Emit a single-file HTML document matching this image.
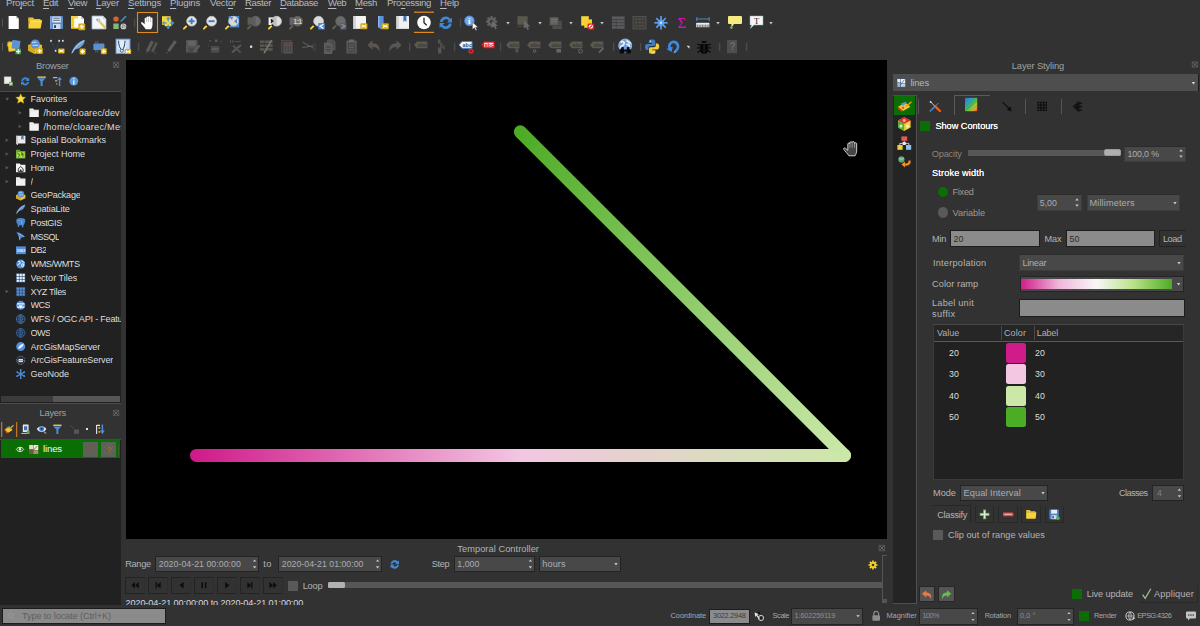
<!DOCTYPE html>
<html><head><meta charset="utf-8"><title>QGIS</title>
<style>
html,body{margin:0;padding:0;background:#323232;}
body{width:1200px;height:626px;overflow:hidden;position:relative;font-family:"Liberation Sans","DejaVu Sans",sans-serif;font-size:9px;color:#b4b4b4;}
div{position:absolute;box-sizing:border-box;}
.t{position:absolute;white-space:nowrap;line-height:12px;height:12px;}
.u{text-decoration:underline;text-underline-offset:1.6px;text-decoration-thickness:0.8px;}
svg.ov{position:absolute;left:0;top:0;width:1200px;height:626px;pointer-events:none;}
</style></head><body>
<span class="t" style="left:6px;top:-3.1px;color:#b6bac2;font-size:9.6px;letter-spacing:-0.27px;">Pro<span class="u">j</span>ect</span>
<span class="t" style="left:43px;top:-3.1px;color:#b6bac2;font-size:9.6px;letter-spacing:-0.39px;"><span class="u">E</span>dit</span>
<span class="t" style="left:68px;top:-3.1px;color:#b6bac2;font-size:9.6px;letter-spacing:-0.41px;"><span class="u">V</span>iew</span>
<span class="t" style="left:96px;top:-3.1px;color:#b6bac2;font-size:9.6px;letter-spacing:-0.20px;"><span class="u">L</span>ayer</span>
<span class="t" style="left:128px;top:-3.1px;color:#b6bac2;font-size:9.6px;letter-spacing:-0.21px;"><span class="u">S</span>ettings</span>
<span class="t" style="left:170px;top:-3.1px;color:#b6bac2;font-size:9.6px;letter-spacing:-0.21px;"><span class="u">P</span>lugins</span>
<span class="t" style="left:210px;top:-3.1px;color:#b6bac2;font-size:9.6px;letter-spacing:-0.20px;">Vect<span class="u">o</span>r</span>
<span class="t" style="left:245px;top:-3.1px;color:#b6bac2;font-size:9.6px;letter-spacing:-0.38px;"><span class="u">R</span>aster</span>
<span class="t" style="left:280px;top:-3.1px;color:#b6bac2;font-size:9.6px;letter-spacing:-0.38px;"><span class="u">D</span>atabase</span>
<span class="t" style="left:328px;top:-3.1px;color:#b6bac2;font-size:9.6px;letter-spacing:-0.52px;"><span class="u">W</span>eb</span>
<span class="t" style="left:355px;top:-3.1px;color:#b6bac2;font-size:9.6px;letter-spacing:-0.37px;"><span class="u">M</span>esh</span>
<span class="t" style="left:387px;top:-3.1px;color:#b6bac2;font-size:9.6px;letter-spacing:-0.35px;">Pro<span class="u">c</span>essing</span>
<span class="t" style="left:440px;top:-3.1px;color:#b6bac2;font-size:9.6px;letter-spacing:-0.18px;"><span class="u">H</span>elp</span>
<div style="left:125.9px;top:59.6px;width:761px;height:479.2px;background:#000;"></div>
<span class="t" style="left:36px;top:59.8px;color:#9fa3a9;font-size:9.3px;letter-spacing:-0.19px;">Browser</span>
<div style="left:0px;top:91px;width:121px;height:1px;background:#4a4a4a;"></div>
<div style="left:0px;top:92px;width:121px;height:311.3px;background:#212121;"></div>
<span class="t" style="left:30.5px;top:93.0px;color:#dedede;font-size:9.1px;max-width:90.5px;overflow:hidden;letter-spacing:-0.08px;">Favorites</span>
<span class="t" style="left:43.4px;top:106.8px;color:#dedede;font-size:9.1px;max-width:77.6px;overflow:hidden;letter-spacing:0.12px;">/home/cloarec/dev</span>
<span class="t" style="left:43.4px;top:120.5px;color:#dedede;font-size:9.1px;max-width:77.6px;overflow:hidden;letter-spacing:0.29px;">/home/cloarec/Mes</span>
<span class="t" style="left:30.5px;top:134.2px;color:#dedede;font-size:9.1px;max-width:90.5px;overflow:hidden;letter-spacing:-0.01px;">Spatial Bookmarks</span>
<span class="t" style="left:30.5px;top:148.0px;color:#dedede;font-size:9.1px;max-width:90.5px;overflow:hidden;letter-spacing:-0.05px;">Project Home</span>
<span class="t" style="left:30.5px;top:161.8px;color:#dedede;font-size:9.1px;max-width:90.5px;overflow:hidden;letter-spacing:-0.19px;">Home</span>
<span class="t" style="left:30.5px;top:175.5px;color:#dedede;font-size:9.1px;max-width:90.5px;overflow:hidden;letter-spacing:0.17px;">/</span>
<span class="t" style="left:30.5px;top:189.2px;color:#dedede;font-size:9.1px;max-width:90.5px;overflow:hidden;letter-spacing:-0.26px;">GeoPackage</span>
<span class="t" style="left:30.5px;top:203.0px;color:#dedede;font-size:9.1px;max-width:90.5px;overflow:hidden;letter-spacing:-0.12px;">SpatiaLite</span>
<span class="t" style="left:30.5px;top:216.8px;color:#dedede;font-size:9.1px;max-width:90.5px;overflow:hidden;letter-spacing:-0.34px;">PostGIS</span>
<span class="t" style="left:30.5px;top:230.5px;color:#dedede;font-size:9.1px;max-width:90.5px;overflow:hidden;letter-spacing:-0.60px;">MSSQL</span>
<span class="t" style="left:30.5px;top:244.2px;color:#dedede;font-size:9.1px;max-width:90.5px;overflow:hidden;letter-spacing:-0.57px;">DB2</span>
<span class="t" style="left:30.5px;top:258.0px;color:#dedede;font-size:9.1px;max-width:90.5px;overflow:hidden;letter-spacing:-0.43px;">WMS/WMTS</span>
<span class="t" style="left:30.5px;top:271.8px;color:#dedede;font-size:9.1px;max-width:90.5px;overflow:hidden;letter-spacing:-0.02px;">Vector Tiles</span>
<span class="t" style="left:30.5px;top:285.5px;color:#dedede;font-size:9.1px;max-width:90.5px;overflow:hidden;letter-spacing:-0.38px;">XYZ Tiles</span>
<span class="t" style="left:30.5px;top:299.2px;color:#dedede;font-size:9.1px;max-width:90.5px;overflow:hidden;letter-spacing:-0.60px;">WCS</span>
<span class="t" style="left:30.5px;top:313.0px;color:#dedede;font-size:9.1px;max-width:90.5px;overflow:hidden;letter-spacing:-0.22px;">WFS / OGC API - Features</span>
<span class="t" style="left:30.5px;top:326.8px;color:#dedede;font-size:9.1px;max-width:90.5px;overflow:hidden;letter-spacing:-0.60px;">OWS</span>
<span class="t" style="left:30.5px;top:340.5px;color:#dedede;font-size:9.1px;max-width:90.5px;overflow:hidden;letter-spacing:-0.14px;">ArcGisMapServer</span>
<span class="t" style="left:30.5px;top:354.2px;color:#dedede;font-size:9.1px;max-width:90.5px;overflow:hidden;letter-spacing:-0.14px;">ArcGisFeatureServer</span>
<span class="t" style="left:30.5px;top:368.0px;color:#dedede;font-size:9.1px;max-width:90.5px;overflow:hidden;letter-spacing:-0.06px;">GeoNode</span>
<div style="left:1px;top:396px;width:119px;height:6.2px;background:#565656;"></div>
<div style="left:1px;top:396px;width:52px;height:6.2px;background:#3b3b3b;"></div>
<span class="t" style="left:39.5px;top:407.4px;color:#9fa3a9;font-size:9.3px;letter-spacing:-0.23px;">Layers</span>
<div style="left:0px;top:440px;width:120.6px;height:164.7px;background:#212121;"></div>
<div style="left:1.2px;top:440.2px;width:118.6px;height:17.8px;background:#0b6e05;"></div>
<span class="t" style="left:43px;top:443.0px;color:#f4f6fa;font-size:9.6px;letter-spacing:-0.15px;">lines</span>
<div style="left:83px;top:442px;width:15px;height:14.5px;background:#5c615a;"></div>
<div style="left:101px;top:442px;width:15px;height:14.5px;background:#5c615a;"></div>
<div style="left:118px;top:444px;width:1px;height:11px;background:#3d5c3a;"></div>
<span class="t" style="left:457.3px;top:543.0px;color:#aeb2b8;font-size:9.3px;letter-spacing:0.03px;">Temporal Controller</span>
<span class="t" style="left:125.3px;top:558.0px;color:#b4b4b4;font-size:9.2px;letter-spacing:-0.34px;">Range</span>
<div style="left:155.3px;top:555.6px;width:104px;height:16.6px;background:#484848;border:1px solid #242424;"></div>
<span class="t" style="left:158.8px;top:557.9px;color:#a9adb5;font-size:8.8px;letter-spacing:0.02px;">2020-04-21 00:00:00</span>
<span class="t" style="left:263.3px;top:558.0px;color:#b4b4b4;font-size:9.2px;letter-spacing:0.36px;">to</span>
<div style="left:278.3px;top:555.6px;width:103.8px;height:16.6px;background:#484848;border:1px solid #242424;"></div>
<span class="t" style="left:281.8px;top:557.9px;color:#a9adb5;font-size:8.8px;letter-spacing:-0.00px;">2020-04-21 01:00:00</span>
<span class="t" style="left:431.7px;top:558.0px;color:#b4b4b4;font-size:9.2px;letter-spacing:-0.33px;">Step</span>
<div style="left:454.3px;top:555.6px;width:81px;height:16.6px;background:#484848;border:1px solid #242424;"></div>
<span class="t" style="left:457.3px;top:557.9px;color:#a9adb5;font-size:8.8px;letter-spacing:-0.00px;">1,000</span>
<div style="left:539.3px;top:555.6px;width:81.5px;height:16.6px;background:#484848;border:1px solid #242424;"></div>
<span class="t" style="left:542.3px;top:557.9px;color:#a9adb5;font-size:9.2px;letter-spacing:0.08px;">hours</span>
<div style="left:125.4px;top:577px;width:19.6px;height:16.5px;border:1px solid #232323;border-right-color:#2e2e2e;"></div>
<div style="left:148.4px;top:577px;width:19.6px;height:16.5px;border:1px solid #232323;border-right-color:#2e2e2e;"></div>
<div style="left:171.4px;top:577px;width:19.6px;height:16.5px;border:1px solid #232323;border-right-color:#2e2e2e;"></div>
<div style="left:194.4px;top:577px;width:19.6px;height:16.5px;border:1px solid #232323;border-right-color:#2e2e2e;"></div>
<div style="left:217.4px;top:577px;width:19.6px;height:16.5px;border:1px solid #232323;border-right-color:#2e2e2e;"></div>
<div style="left:240.4px;top:577px;width:19.6px;height:16.5px;border:1px solid #232323;border-right-color:#2e2e2e;"></div>
<div style="left:263.4px;top:577px;width:19.6px;height:16.5px;border:1px solid #232323;border-right-color:#2e2e2e;"></div>
<div style="left:288px;top:580.5px;width:10px;height:10px;background:#595959;"></div>
<span class="t" style="left:302.7px;top:579.5px;color:#b4b4b4;font-size:9.2px;letter-spacing:-0.21px;">Loop</span>
<div style="left:328px;top:582px;width:554px;height:6px;background:#575757;"></div>
<div style="left:328px;top:582px;width:17px;height:6px;background:#b2b2b2;border-radius:1.5px;"></div>
<div style="left:125px;top:597px;width:300px;height:8px;overflow:hidden;">
<span class="t" style="left:0.5px;top:0.4px;color:#d6dae0;font-size:9.1px;letter-spacing:-0.09px;">2020-04-21 00:00:00 to 2020-04-21 01:00:00</span>
</div>
<div style="left:882px;top:555px;width:5px;height:48px;border-left:1px solid #555;border-top:1px solid #555;"></div>
<div style="left:882px;top:599px;width:5px;height:4px;background:#555;"></div>
<div style="left:2.3px;top:607.5px;width:163.3px;height:16.5px;background:#8b8b8b;border:1px solid #1d1d1d;"></div>
<span class="t" style="left:22px;top:610.0px;color:#5e5e5e;font-size:9.1px;letter-spacing:-0.08px;">Type to locate (Ctrl+K)</span>
<span class="t" style="left:670.6px;top:610.0px;color:#a4a8b0;font-size:7.4px;letter-spacing:-0.08px;">Coordinate</span>
<div style="left:708.6px;top:608.6px;width:41.8px;height:15px;background:#8b8b8b;border:1px solid #1d1d1d;"></div>
<span class="t" style="left:713.1px;top:610.1px;color:#3c3c3c;font-size:7.3px;letter-spacing:-0.22px;">3022.2948</span>
<span class="t" style="left:772.6px;top:610.0px;color:#a4a8b0;font-size:7.4px;letter-spacing:-0.42px;">Scale</span>
<div style="left:791.4px;top:607.8px;width:71.5px;height:16.8px;background:#484848;border:1px solid #242424;"></div>
<span class="t" style="left:794.6px;top:610.2px;color:#8f8f8f;font-size:7.3px;letter-spacing:-0.13px;">1:602259119</span>
<span class="t" style="left:886.4px;top:610.0px;color:#a4a8b0;font-size:7.4px;letter-spacing:-0.00px;">Magnifier</span>
<div style="left:918.5px;top:607.5px;width:59.8px;height:17.6px;background:#484848;border:1px solid #242424;"></div>
<span class="t" style="left:922.5px;top:610.3px;color:#8f8f8f;font-size:7.3px;letter-spacing:-0.54px;">100%</span>
<span class="t" style="left:984.7px;top:610.0px;color:#a4a8b0;font-size:7.4px;letter-spacing:-0.15px;">Rotation</span>
<div style="left:1017px;top:607.5px;width:57.4px;height:17.6px;background:#484848;border:1px solid #242424;"></div>
<span class="t" style="left:1020px;top:610.3px;color:#8f8f8f;font-size:7.3px;letter-spacing:0.06px;">0,0 °</span>
<div style="left:1079px;top:610.7px;width:10px;height:10.4px;background:#0b6e05;"></div>
<span class="t" style="left:1094px;top:610.0px;color:#a4a8b0;font-size:7.4px;letter-spacing:-0.29px;">Render</span>
<span class="t" style="left:1137.2px;top:610.0px;color:#a4a8b0;font-size:7.4px;letter-spacing:-0.54px;">EPSG:4326</span>
<span class="t" style="left:1011.8px;top:60.0px;color:#9fa3a9;font-size:9.3px;letter-spacing:-0.12px;">Layer Styling</span>
<div style="left:893px;top:74px;width:305.6px;height:17px;background:#4e4e4e;border-right:1px solid #1e1e1e;"></div>
<span class="t" style="left:910.4px;top:76.5px;color:#b4b8be;font-size:9.4px;letter-spacing:-0.14px;">lines</span>
<div style="left:893px;top:94.6px;width:24px;height:509.4px;background:#242424;border-top:1px solid #4e4e4e;border-right:1px solid #505050;border-bottom:1px solid #505050;"></div>
<div style="left:894px;top:96px;width:21.4px;height:19px;background:#0b6e05;"></div>
<div style="left:918.2px;top:99px;width:1px;height:15px;background:#555;"></div>
<div style="left:1025px;top:99px;width:1px;height:14.5px;background:#555;"></div>
<div style="left:1061px;top:99px;width:1px;height:14.5px;background:#555;"></div>
<div style="left:954px;top:95px;width:36px;height:20px;border-top:1px solid #5a5a5a;border-left:1px solid #5a5a5a;"></div>
<div style="left:920px;top:121px;width:10px;height:10px;background:#0b6e05;"></div>
<span class="t" style="left:935.4px;top:120.0px;color:#ffffff;font-size:9.2px;text-shadow:0 0 0.5px #fff;letter-spacing:-0.02px;">Show Contours</span>
<span class="t" style="left:931.8px;top:147.5px;color:#8c867c;font-size:9.2px;letter-spacing:-0.18px;">Opacity</span>
<div style="left:967.5px;top:150px;width:153px;height:6px;background:#575757;"></div>
<div style="left:1103.8px;top:149.3px;width:17.4px;height:7px;background:#b0b0b0;border-radius:2px;border:1px solid #9a9a9a;"></div>
<div style="left:1124.2px;top:145.8px;width:62px;height:16.2px;background:#484848;border:1px solid #3c3c3c;border-top-color:#2b2b2b;"></div>
<span class="t" style="left:1127.6px;top:147.9px;color:#a9adb5;font-size:8.8px;letter-spacing:-0.15px;">100,0 %</span>
<span class="t" style="left:932px;top:166.5px;color:#ffffff;font-size:9.2px;text-shadow:0 0 0.5px #fff;letter-spacing:0.14px;">Stroke width</span>
<div style="left:937.6px;top:186.8px;width:10.4px;height:10.4px;background:#0b6e05;border-radius:50%;"></div>
<span class="t" style="left:952.5px;top:186.0px;color:#a09a92;font-size:9.2px;letter-spacing:-0.27px;">Fixed</span>
<div style="left:937.6px;top:207.3px;width:10.4px;height:10.4px;background:#595959;border-radius:50%;"></div>
<span class="t" style="left:952.5px;top:206.5px;color:#a09a92;font-size:9.2px;letter-spacing:-0.07px;">Variable</span>
<div style="left:1036.8px;top:194.4px;width:45.2px;height:16.4px;background:#484848;border:1px solid #3c3c3c;border-top-color:#2b2b2b;"></div>
<span class="t" style="left:1039.8px;top:196.6px;color:#a9adb5;font-size:8.8px;letter-spacing:-0.03px;">5,00</span>
<div style="left:1086.5px;top:194.4px;width:93px;height:16.4px;background:#484848;border:1px solid #3c3c3c;border-top-color:#2b2b2b;"></div>
<span class="t" style="left:1089.5px;top:196.6px;color:#a9adb5;font-size:9.2px;letter-spacing:0.12px;">Millimeters</span>
<span class="t" style="left:932px;top:232.5px;color:#b4b4b4;font-size:9.2px;letter-spacing:-0.27px;">Min</span>
<div style="left:950.2px;top:230.4px;width:90px;height:16.6px;background:#8b8b8b;border:1px solid #1d1d1d;"></div>
<span class="t" style="left:953.6px;top:232.7px;color:#2e2e2e;font-size:8.8px;letter-spacing:0.05px;">20</span>
<span class="t" style="left:1044.6px;top:232.5px;color:#b4b4b4;font-size:9.2px;letter-spacing:-0.22px;">Max</span>
<div style="left:1066px;top:230.4px;width:89.4px;height:16.6px;background:#8b8b8b;border:1px solid #1d1d1d;"></div>
<span class="t" style="left:1069.4px;top:232.7px;color:#2e2e2e;font-size:8.8px;letter-spacing:0.25px;">50</span>
<div style="left:1159px;top:230.4px;width:27px;height:16.6px;border:1px solid #222;border-right:none;"></div>
<span class="t" style="left:1162.9px;top:232.5px;color:#b4b4b4;font-size:9.2px;letter-spacing:-0.44px;">Load</span>
<span class="t" style="left:933px;top:256.5px;color:#b4b4b4;font-size:9.2px;letter-spacing:0.22px;">Interpolation</span>
<div style="left:1019.4px;top:254px;width:164.6px;height:17px;background:#484848;border:1px solid #3c3c3c;border-top-color:#2b2b2b;"></div>
<span class="t" style="left:1022.4px;top:256.5px;color:#a9adb5;font-size:9.2px;letter-spacing:-0.26px;">Linear</span>
<span class="t" style="left:932px;top:277.5px;color:#b4b4b4;font-size:9.2px;letter-spacing:0.08px;">Color ramp</span>
<div style="left:1019.6px;top:275.6px;width:164.4px;height:16.2px;background:#484848;border:1px solid #242424;"></div>
<div style="left:1020.8px;top:279px;width:151.5px;height:10px;background:linear-gradient(90deg,#d01c8b 0%,#f1b6da 25%,#f7f7f7 50%,#b8e186 75%,#4dac26 100%);"></div>
<span class="t" style="left:932px;top:296.8px;color:#b4b4b4;font-size:9.2px;letter-spacing:0.21px;">Label unit</span>
<span class="t" style="left:932px;top:308.2px;color:#b4b4b4;font-size:9.2px;letter-spacing:0.35px;">suffix</span>
<div style="left:1018.8px;top:298.8px;width:166.2px;height:18px;background:#8b8b8b;border:1px solid #1d1d1d;"></div>
<div style="left:933px;top:324px;width:251px;height:156px;background:#212121;border:1px solid #3a3a3a;border-top-color:#484848;"></div>
<div style="left:934px;top:325px;width:249px;height:16.5px;background:#262626;border-bottom:1px solid #585858;"></div>
<div style="left:1001px;top:326px;width:1px;height:14px;background:#4a4a4a;"></div>
<div style="left:1034px;top:326px;width:1px;height:14px;background:#4a4a4a;"></div>
<span class="t" style="left:937px;top:327.0px;color:#aeb0b6;font-size:9px;letter-spacing:-0.03px;">Value</span>
<span class="t" style="left:1004px;top:327.0px;color:#aeb0b6;font-size:9px;letter-spacing:0.10px;">Color</span>
<span class="t" style="left:1036.8px;top:327.0px;color:#aeb0b6;font-size:9px;letter-spacing:-0.17px;">Label</span>
<span class="t" style="left:949px;top:346.8px;color:#dedede;font-size:8.8px;letter-spacing:0.20px;">20</span>
<span class="t" style="left:1035px;top:346.8px;color:#dedede;font-size:8.8px;letter-spacing:0.00px;">20</span>
<div style="left:1006px;top:342.8px;width:20.4px;height:20px;background:#d01c8b;border-radius:2.5px;"></div>
<span class="t" style="left:949px;top:368.1px;color:#dedede;font-size:8.8px;letter-spacing:0.20px;">30</span>
<span class="t" style="left:1035px;top:368.1px;color:#dedede;font-size:8.8px;letter-spacing:0.00px;">30</span>
<div style="left:1006px;top:364.1px;width:20.4px;height:20px;background:#f3c6e2;border-radius:2.5px;"></div>
<span class="t" style="left:949px;top:389.5px;color:#dedede;font-size:8.8px;letter-spacing:0.20px;">40</span>
<span class="t" style="left:1035px;top:389.5px;color:#dedede;font-size:8.8px;letter-spacing:0.00px;">40</span>
<div style="left:1006px;top:385.5px;width:20.4px;height:20px;background:#cce8a9;border-radius:2.5px;"></div>
<span class="t" style="left:949px;top:410.8px;color:#dedede;font-size:8.8px;letter-spacing:0.20px;">50</span>
<span class="t" style="left:1035px;top:410.8px;color:#dedede;font-size:8.8px;letter-spacing:0.00px;">50</span>
<div style="left:1006px;top:406.8px;width:20.4px;height:20px;background:#4dac26;border-radius:2.5px;"></div>
<span class="t" style="left:933px;top:487.0px;color:#b4b4b4;font-size:9.2px;letter-spacing:0.00px;">Mode</span>
<div style="left:960.4px;top:484.6px;width:87.4px;height:16.8px;background:#484848;border:1px solid #242424;"></div>
<span class="t" style="left:963.6px;top:487.0px;color:#a9adb5;font-size:9.2px;letter-spacing:0.07px;">Equal Interval</span>
<span class="t" style="left:1119px;top:487.0px;color:#b4b4b4;font-size:9.2px;letter-spacing:-0.60px;">Classes</span>
<div style="left:1152px;top:484.6px;width:32px;height:16.8px;background:#484848;border:1px solid #242424;"></div>
<span class="t" style="left:1157px;top:487.0px;color:#808080;font-size:8.8px;">4</span>
<div style="left:933px;top:505.4px;width:37.6px;height:18px;border-top:1px solid #262626;border-right:1px solid #262626;"></div>
<span class="t" style="left:937.2px;top:508.5px;color:#b4b4b4;font-size:9.2px;letter-spacing:-0.27px;">Classify</span>
<div style="left:974.7px;top:505.6px;width:19.6px;height:17.6px;border:1px solid #282828;border-top-color:#303030;"></div>
<div style="left:998px;top:505.6px;width:19.6px;height:17.6px;border:1px solid #282828;border-top-color:#303030;"></div>
<div style="left:1021.2px;top:505.6px;width:19.6px;height:17.6px;border:1px solid #282828;border-top-color:#303030;"></div>
<div style="left:1044.6px;top:505.6px;width:19.6px;height:17.6px;border:1px solid #282828;border-top-color:#303030;"></div>
<div style="left:933px;top:530px;width:10px;height:10px;background:#595959;"></div>
<span class="t" style="left:948px;top:529.0px;color:#b4b4b4;font-size:9.2px;letter-spacing:0.01px;">Clip out of range values</span>
<div style="left:918.6px;top:586.4px;width:16px;height:16px;background:#555555;border:1px solid #262626;"></div>
<div style="left:938.4px;top:586.4px;width:16.2px;height:16px;background:#555555;border:1px solid #262626;"></div>
<div style="left:1072px;top:589px;width:10px;height:10px;background:#0b6e05;"></div>
<span class="t" style="left:1086.7px;top:588.0px;color:#b4b4b4;font-size:9.2px;letter-spacing:-0.11px;">Live update</span>
<div style="left:1139px;top:585px;width:58.6px;height:18.4px;border-right:1px solid #292929;border-bottom:1px solid #292929;"></div>
<span class="t" style="left:1154px;top:588.0px;color:#b4b4b4;font-size:9.2px;letter-spacing:0.13px;">Appliquer</span>
<div style="left:0px;top:439px;width:121px;height:1px;background:#484848;"></div>
<div style="left:0px;top:403.3px;width:121px;height:1px;background:#4a4a4a;"></div>
<svg class="ov" viewBox="0 0 1200 626">
<rect x="2" y="19" width="1" height="7.5" fill="#555"/>
<g transform="translate(8.6 16)"><path d="M0 0H7.4L10.2 2.8V13H0Z" fill="#fdfdfd" /><path d="M7.4 0V2.8H10.2Z" fill="#c9c9c9" /></g>
<g transform="translate(28 17)"><path d="M0.3 0.5H5L6.2 2H12.5V4H0.3Z" fill="#e6bf3a" /><path d="M1.6 3.2H14.2L12.6 11.5H0.3Z" fill="#f7d53a" /><path d="M0.3 2.5V11.5L1.8 3.4Z" fill="#d9b02e" /><line x1="2" y1="4.3" x2="13" y2="4.3" stroke="#fbe88a" stroke-width="0.7" /></g>
<g transform="translate(50 16)"><rect x="0" y="0" width="13" height="13" fill="#5b8cc8" rx="0.8" /><rect x="2.3" y="0.6" width="8.4" height="5.8" fill="#e9edf2" /><line x1="3.2" y1="2.2" x2="9.8" y2="2.2" stroke="#44505e" stroke-width="0.9" /><line x1="3.2" y1="4.3" x2="9.8" y2="4.3" stroke="#44505e" stroke-width="0.9" /><rect x="3" y="8" width="7.4" height="5" fill="#d4dbe6" /><rect x="4" y="9.2" width="2" height="2.8" fill="#2a4b7c" /><rect x="0" y="0" width="1.3" height="13" fill="#7aa6da" /></g>
<g transform="translate(71 16)"><path d="M0 0H10L13 3V13H0Z" fill="#fbfbfb" /><path d="M10 0V3H13Z" fill="#c9c9c9" /><rect x="0" y="0" width="3.2" height="13" fill="#f7d53a" /><rect x="0" y="0" width="7" height="2.4" fill="#f7d53a" /><line x1="0.5" y1="3" x2="2.5" y2="3" stroke="#d2a70f" stroke-width="0.7" /><line x1="0.5" y1="6" x2="2.5" y2="6" stroke="#d2a70f" stroke-width="0.7" /><line x1="0.5" y1="9" x2="2.5" y2="9" stroke="#d2a70f" stroke-width="0.7" /><rect x="0" y="11.7" width="13" height="1.3" fill="#d2a70f" /><rect x="7.4" y="7.4" width="6.8" height="6.8" fill="#d2a70f" rx="1" /><line x1="8.600000000000001" y1="10.8" x2="13.0" y2="10.8" stroke="#fff" stroke-width="1.1" /><line x1="10.8" y1="8.600000000000001" x2="10.8" y2="13.0" stroke="#fff" stroke-width="1.1" /><line x1="9.200000000000001" y1="9.200000000000001" x2="12.4" y2="12.4" stroke="#fff6d0" stroke-width="0.8" /><line x1="9.200000000000001" y1="12.4" x2="12.4" y2="9.200000000000001" stroke="#fff6d0" stroke-width="0.8" /></g>
<g transform="translate(92 16)"><path d="M0 0H11L14 3V13H0Z" fill="#f4f6f8" stroke="#9fb4cc" stroke-width="0.8" /><path d="M11 0V3H14Z" fill="#c9c9c9" /><line x1="6.5" y1="4.5" x2="13" y2="11.5" stroke="#e3c64a" stroke-width="2.2" stroke-linecap="round"/><line x1="6" y1="4" x2="8.5" y2="6.5" stroke="#cfcfcf" stroke-width="1.6" /><circle cx="5.4" cy="3.6" r="1.0" fill="#aaa" /><line x1="4" y1="3" x2="6" y2="5.5" stroke="#888" stroke-width="0.6" /><line x1="7" y1="2.5" x2="8" y2="4.5" stroke="#999" stroke-width="0.6" /></g>
<g transform="translate(113 16)"><path d="M3 0.3L5.6 1.6V4.6L3 6L0.4 4.6V1.6Z" fill="#d9622b" /><rect x="0.3" y="7.5" width="5.4" height="5.6" fill="#82b77c" rx="0.4" /><line x1="8" y1="5.2" x2="12.6" y2="0.6" stroke="#4f86c6" stroke-width="1.6" stroke-linecap="round"/><line x1="7.3" y1="6.1" x2="8.4" y2="5" stroke="#2f5f9a" stroke-width="1.4" /><circle cx="10.4" cy="10.4" r="2.9" fill="#cfcfcf" /><path d="M9 9.2A2 2 0 0 1 12 11.5" fill="none" stroke="#6c6c6c" stroke-width="0.9" /><circle cx="9.6" cy="11.2" r="0.9" fill="#777" /></g>
<rect x="134" y="19" width="1.3" height="8" fill="#4c4c4c"/>
<rect x="137.5" y="12.5" width="20" height="20" fill="none" stroke="#e08a1e" stroke-width="1.1"/>
<g transform="translate(140.6 15.8) scale(1.2 1.02)"><path d="M4.2 13.2C3.2 11.2 1.2 9 0.4 7.4C0 6.4 1 5.8 1.8 6.6L3.4 8.4V2.6C3.4 1.6 4.8 1.6 4.9 2.6V1.4C5 0.4 6.5 0.4 6.6 1.4V1.2C6.7 0.3 8.2 0.3 8.3 1.3V2.2C8.4 1.4 9.8 1.4 9.9 2.4V8.6C9.9 10.6 9.3 11.8 8.7 13.2Z" fill="#fdfdfd" /><line x1="5.0" y1="2.6" x2="5.0" y2="6" stroke="#999" stroke-width="0.5" /><line x1="6.6" y1="1.8" x2="6.6" y2="6" stroke="#999" stroke-width="0.5" /><line x1="8.3" y1="2.2" x2="8.3" y2="6" stroke="#999" stroke-width="0.5" /></g>
<g transform="translate(161 16)"><rect x="1" y="0.2" width="8.6" height="8.6" fill="#f7d53a" /><rect x="3.6" y="3.4" width="6.8" height="6.8" fill="#f3df3f" /><line x1="8.7" y1="7.0" x2="12.2" y2="7" stroke="#4f8fd6" stroke-width="1.2" /><path d="M13.399999999999999 7.0L11.0 9.2L11.0 4.8Z" fill="#4f8fd6" /><line x1="5.7" y1="7.0" x2="2.2" y2="7" stroke="#4f8fd6" stroke-width="1.2" /><path d="M1.0000000000000002 7.0L3.4000000000000004 4.8L3.4000000000000004 9.2Z" fill="#4f8fd6" /><line x1="7.2" y1="8.5" x2="7.2" y2="12" stroke="#4f8fd6" stroke-width="1.2" /><path d="M7.2 13.2L5.0 10.8L9.4 10.8Z" fill="#4f8fd6" /><line x1="7.2" y1="5.5" x2="7.2" y2="2" stroke="#4f8fd6" stroke-width="1.2" /><path d="M7.2 0.8L9.4 3.2L5.0 3.2Z" fill="#4f8fd6" /></g>
<g transform="translate(183 16)"><line x1="3.6" y1="10.0" x2="0.9" y2="12.7" stroke="#f7d53a" stroke-width="1.8" stroke-linecap="round"/><line x1="5.2" y1="8.4" x2="3.8" y2="9.8" stroke="#151515" stroke-width="2" /><circle cx="8.6" cy="5.2" r="4.9" fill="#e4e4e4" stroke="#bdbdbd" stroke-width="0.8" /><g transform="translate(-0.6 -0.4)"><line x1="6.2" y1="5.6" x2="12.2" y2="5.6" stroke="#3f78bd" stroke-width="1.9" /><line x1="9.2" y1="2.6" x2="9.2" y2="8.6" stroke="#3f78bd" stroke-width="1.9" /></g></g>
<g transform="translate(203 16)"><line x1="3.6" y1="10.0" x2="0.9" y2="12.7" stroke="#f7d53a" stroke-width="1.8" stroke-linecap="round"/><line x1="5.2" y1="8.4" x2="3.8" y2="9.8" stroke="#151515" stroke-width="2" /><circle cx="8.6" cy="5.2" r="4.9" fill="#e4e4e4" stroke="#bdbdbd" stroke-width="0.8" /><g transform="translate(-0.6 -0.4)"><line x1="6.2" y1="5.6" x2="12.2" y2="5.6" stroke="#3f78bd" stroke-width="1.9" /></g></g>
<g transform="translate(225 16)"><rect x="3.6" y="0" width="10.6" height="11.4" fill="#4b86cc" /><line x1="3.6" y1="10.0" x2="0.9" y2="12.7" stroke="#f7d53a" stroke-width="1.8" stroke-linecap="round"/><line x1="5.2" y1="8.4" x2="3.8" y2="9.8" stroke="#151515" stroke-width="2" /><circle cx="8.6" cy="5.2" r="4.9" fill="#d8d8d8" stroke="#bdbdbd" stroke-width="0.8" /><g transform="translate(-0.6 -0.4)"><path d="M12.6 3.2L9.6 5.6L12.6 8Z" fill="#4b86cc" /><path d="M5.4 1.6L7.6 4.4L8.6 1.4Z" fill="#4b86cc" /></g></g>
<g transform="translate(247 16)"><rect x="0.6" y="1.4" width="4.2" height="7.4" fill="#5e5b52" /><line x1="3.6" y1="10.0" x2="0.9" y2="12.7" stroke="#66614a" stroke-width="1.8" stroke-linecap="round"/><line x1="5.2" y1="8.4" x2="3.8" y2="9.8" stroke="#444" stroke-width="2" /><circle cx="8.6" cy="5.2" r="4.9" fill="#6b6b6b" stroke="#5e5e5c" stroke-width="0.8" /><g transform="translate(-0.6 -0.4)"><path d="M9.2 0.8A4.8 4.8 0 0 0 9.2 10.4Z" fill="#5c5c5c" /></g></g>
<g transform="translate(268 16)"><rect x="0.6" y="1.4" width="4.4" height="7.6" fill="#f4f4f4" /><line x1="3.6" y1="10.0" x2="0.9" y2="12.7" stroke="#f7d53a" stroke-width="1.8" stroke-linecap="round"/><line x1="5.2" y1="8.4" x2="3.8" y2="9.8" stroke="#151515" stroke-width="2" /><circle cx="8.6" cy="5.2" r="4.9" fill="#dedede" stroke="#bdbdbd" stroke-width="0.8" /><g transform="translate(-0.6 -0.4)"><path d="M9.2 0.8A4.8 4.8 0 0 0 9.2 10.4Z" fill="#bdbdbd" /><path d="M3.4 2.6L6.4 5.4L3.4 8.2Z" fill="#222" /></g></g>
<g transform="translate(289 16)"><rect x="0.6" y="1.4" width="4.4" height="7.6" fill="#666" /><line x1="3.6" y1="10.0" x2="0.9" y2="12.7" stroke="#66614a" stroke-width="1.8" stroke-linecap="round"/><line x1="5.2" y1="8.4" x2="3.8" y2="9.8" stroke="#444" stroke-width="2" /><circle cx="8.6" cy="5.2" r="4.9" fill="#6b6b6b" stroke="#5e5e5c" stroke-width="0.8" /><g transform="translate(-0.6 -0.4)"><text x="5.2" y="8.2" fill="#d0d0d0" font-size="6.6" font-family="Liberation Sans, sans-serif" font-weight="bold" letter-spacing="-0.6">1:1</text></g></g>
<g transform="translate(310 16)"><line x1="3.6" y1="10.0" x2="0.9" y2="12.7" stroke="#f7d53a" stroke-width="1.8" stroke-linecap="round"/><line x1="5.2" y1="8.4" x2="3.8" y2="9.8" stroke="#151515" stroke-width="2" /><circle cx="8.6" cy="5.2" r="4.9" fill="#dcdcdc" stroke="#bdbdbd" stroke-width="0.8" /><g transform="translate(-0.6 -0.4)"></g><rect x="8.2" y="7" width="6.6" height="6.6" fill="#4b8ad4" rx="0.6" /><path d="M13.4 8.2L10 10.3L13.4 12.4" fill="none" stroke="#fff" stroke-width="1.3" /></g>
<g transform="translate(332 16)"><line x1="3.6" y1="10.0" x2="0.9" y2="12.7" stroke="#66614a" stroke-width="1.8" stroke-linecap="round"/><line x1="5.2" y1="8.4" x2="3.8" y2="9.8" stroke="#444" stroke-width="2" /><circle cx="8.6" cy="5.2" r="4.9" fill="#6b6b6b" stroke="#5e5e5c" stroke-width="0.8" /><g transform="translate(-0.6 -0.4)"></g><rect x="8.2" y="7" width="6.2" height="6.4" fill="#5a6068" rx="0.6" /><path d="M9.6 8.2L13 10.2L9.6 12.2" fill="none" stroke="#8d959e" stroke-width="1.2" /></g>
<g transform="translate(353 16)"><rect x="0.4" y="0" width="12.6" height="13" fill="#f3f3f3" rx="0.6" /><rect x="0.4" y="0" width="2.6" height="13" fill="#d6d6d6" /><line x1="0.6" y1="12.4" x2="13" y2="12.4" stroke="#cfcfcf" stroke-width="0.8" /><rect x="7.4" y="7.2" width="7" height="6" fill="#d2a70f" rx="1" /><line x1="8.7" y1="8.799999999999999" x2="13.100000000000001" y2="11.6" stroke="#fff" stroke-width="0.9" /><line x1="8.7" y1="11.6" x2="13.100000000000001" y2="8.799999999999999" stroke="#fff" stroke-width="0.9" /><line x1="8.5" y1="10.2" x2="13.3" y2="10.2" stroke="#fff" stroke-width="0.9" /></g>
<g transform="translate(377 16)"><path d="M1 0H6.6V11L4.2 13.4L1 11Z" fill="#5b93d6" /><path d="M1 0H2.4V12L1 11Z" fill="#89b3e6" /><rect x="4.6" y="7.2" width="7.2" height="6" fill="#d2a70f" rx="1" /><line x1="5.999999999999999" y1="8.799999999999999" x2="10.399999999999999" y2="11.6" stroke="#fff" stroke-width="0.9" /><line x1="5.999999999999999" y1="11.6" x2="10.399999999999999" y2="8.799999999999999" stroke="#fff" stroke-width="0.9" /><line x1="5.799999999999999" y1="10.2" x2="10.6" y2="10.2" stroke="#fff" stroke-width="0.9" /></g>
<g transform="translate(396 16)"><rect x="0.4" y="0" width="12.6" height="13" fill="#f0f0f0" rx="0.6" /><rect x="0.4" y="0" width="2.6" height="13" fill="#d6d6d6" /><line x1="0.6" y1="12.4" x2="13" y2="12.4" stroke="#cfcfcf" stroke-width="0.8" /><path d="M7.4 0H10.4V6L8.9 4.6L7.4 6Z" fill="#3f74b8" /></g>
<rect x="414" y="11.6" width="20" height="1.2" fill="#e08a1e"/><rect x="414" y="31.8" width="20" height="1.2" fill="#e08a1e"/>
<g transform="translate(417 15.5)"><circle cx="7" cy="7" r="6.8" fill="#fdfdfd" /><path d="M7 2.6V7.2L9.4 9.4" fill="none" stroke="#222" stroke-width="1.3" stroke-linecap="round"/></g>
<g transform="translate(439 16)"><path d="M1 6A5.8 5.8 0 0 1 11.6 3L13 1.4V6.4H8L9.8 4.6A3.4 3.4 0 0 0 3.6 6Z" fill="#3f8ad8" /><path d="M12.6 7.4A5.8 5.8 0 0 1 2 10.4L0.6 12V7H5.6L3.8 8.8A3.4 3.4 0 0 0 10 7.4Z" fill="#3f8ad8" /></g>
<rect x="460" y="19" width="1.3" height="8" fill="#4c4c4c"/>
<g transform="translate(464 15.5)"><circle cx="5.4" cy="5.2" r="5.2" fill="#4d8fdc" /><circle cx="5.4" cy="5.2" r="4.2" fill="#74aaea" /><text x="3.9" y="8.4" fill="#fff" font-size="9" font-weight="bold" font-family="Liberation Serif, serif">i</text><path d="M8.4 6.6V14L10.4 12.2L11.8 15L13 14.4L11.6 11.8H14Z" fill="#fdfdfd" stroke="#333" stroke-width="0.4" /></g>
<g transform="translate(486 16)"><line x1="8.3" y1="5.6" x2="11.2" y2="5.6" stroke="#626260" stroke-width="2.2" /><line x1="7.51" y1="7.51" x2="9.56" y2="9.56" stroke="#626260" stroke-width="2.2" /><line x1="5.6" y1="8.3" x2="5.6" y2="11.2" stroke="#626260" stroke-width="2.2" /><line x1="3.69" y1="7.51" x2="1.64" y2="9.56" stroke="#626260" stroke-width="2.2" /><line x1="2.9" y1="5.6" x2="0.0" y2="5.6" stroke="#626260" stroke-width="2.2" /><line x1="3.69" y1="3.69" x2="1.64" y2="1.64" stroke="#626260" stroke-width="2.2" /><line x1="5.6" y1="2.9" x2="5.6" y2="0.0" stroke="#626260" stroke-width="2.2" /><line x1="7.51" y1="3.69" x2="9.56" y2="1.64" stroke="#626260" stroke-width="2.2" /><circle cx="5.6" cy="5.6" r="4.2" fill="#626260" /><circle cx="5.6" cy="5.6" r="1.8900000000000001" fill="#3a3a3a" /><path d="M6.2 5V11.8L8 10.4L9.4 13.4L10.8 12.8L9.4 10H12Z" fill="#6e6e6c" /></g>
<path d="M506.3 22H509.7L508 24.5Z" fill="#c8c8c8"/>
<g transform="translate(517 16)"><rect x="0.4" y="0.2" width="10.2" height="8.6" fill="#5a574e" /><path d="M1 10.4H11" fill="none" stroke="#5a574e" stroke-width="1" stroke-dasharray="1.4 1"/><path d="M7 4.6V12.6L9 11L10.4 14L12 13.3L10.6 10.4H13.4Z" fill="#6a6a6a" /></g>
<path d="M538.3 22H541.7L540 24.5Z" fill="#c8c8c8"/>
<g transform="translate(549 17)"><rect x="3.4" y="3.6" width="9.4" height="8.4" fill="#4d4d4a" /><rect x="0.6" y="0" width="9.2" height="8.4" fill="#5d5d5a" stroke="#3a3a3a" stroke-width="0.5" /><line x1="2" y1="2.4" x2="8.4" y2="2.4" stroke="#7c7a70" stroke-width="0.9" /><line x1="2" y1="4.6" x2="8.4" y2="4.6" stroke="#7c7a70" stroke-width="0.9" /><line x1="2" y1="6.6" x2="8.4" y2="6.6" stroke="#6a6a64" stroke-width="0.7" /></g>
<path d="M569.3 22H572.7L571 24.5Z" fill="#c8c8c8"/>
<g transform="translate(581 16)"><rect x="0.2" y="0.2" width="7.6" height="9.4" fill="#f4d53c" /><rect x="3.2" y="3.4" width="7.8" height="8.4" fill="#f2cf2c" /><rect x="6.6" y="7.4" width="6.6" height="6.4" fill="#e02020" rx="1.4" /><circle cx="9.9" cy="10.6" r="2.1" fill="#fff" /><line x1="8.6" y1="11.9" x2="11.2" y2="9.3" stroke="#e02020" stroke-width="1.1" /></g>
<path d="M600.3 22H603.7L602 24.5Z" fill="#c8c8c8"/>
<g transform="translate(612 16)"><rect x="0" y="0.4" width="12.6" height="12.4" fill="#5a5a5c" /><line x1="0" y1="3.6" x2="12.6" y2="3.6" stroke="#3c3c3e" stroke-width="0.8" /><line x1="0" y1="6.6" x2="12.6" y2="6.6" stroke="#3c3c3e" stroke-width="0.8" /><line x1="0" y1="9.6" x2="12.6" y2="9.6" stroke="#3c3c3e" stroke-width="0.8" /><line x1="4.2" y1="3.6" x2="4.2" y2="12.8" stroke="#3c3c3e" stroke-width="0.8" /></g>
<g transform="translate(633 16)"><rect x="0" y="0.4" width="13" height="12.6" fill="#3e3e3c" stroke="#5c5c58" stroke-width="0.7" /><line x1="2.4" y1="3.2" x2="10.6" y2="3.2" stroke="#6a6a64" stroke-width="0.7" stroke-dasharray="2 1.4"/><line x1="2.4" y1="6.6" x2="10.6" y2="6.6" stroke="#6a6a64" stroke-width="0.7" stroke-dasharray="2 1.4"/><line x1="2.4" y1="10" x2="10.6" y2="10" stroke="#6a6a64" stroke-width="0.7" stroke-dasharray="2 1.4"/></g>
<g transform="translate(654 16)"><line x1="8.5" y1="6.8" x2="13.7" y2="6.8" stroke="#5b9be8" stroke-width="1.7" /><line x1="8.06" y1="7.86" x2="11.74" y2="11.54" stroke="#5b9be8" stroke-width="1.7" /><line x1="7.0" y1="8.3" x2="7.0" y2="13.5" stroke="#5b9be8" stroke-width="1.7" /><line x1="5.94" y1="7.86" x2="2.26" y2="11.54" stroke="#5b9be8" stroke-width="1.7" /><line x1="5.5" y1="6.8" x2="0.3" y2="6.8" stroke="#5b9be8" stroke-width="1.7" /><line x1="5.94" y1="5.74" x2="2.26" y2="2.06" stroke="#5b9be8" stroke-width="1.7" /><line x1="7.0" y1="5.3" x2="7.0" y2="0.1" stroke="#5b9be8" stroke-width="1.7" /><line x1="8.06" y1="5.74" x2="11.74" y2="2.06" stroke="#5b9be8" stroke-width="1.7" /><circle cx="7" cy="6.8" r="3.4" fill="#5b9be8" /><circle cx="7" cy="6.8" r="1.35" fill="#c4daf6" /></g>
<g transform="translate(677.6 14.6)"><text x="0" y="13.2" fill="#e010b8" font-size="14.6" font-family="Liberation Serif, serif">Σ</text></g>
<g transform="translate(696 16)"><line x1="0.4" y1="3" x2="13.6" y2="3" stroke="#4e86c6" stroke-width="1" /><line x1="0.8" y1="1" x2="0.8" y2="5" stroke="#4e86c6" stroke-width="1" /><line x1="13.2" y1="1" x2="13.2" y2="5" stroke="#4e86c6" stroke-width="1" /><rect x="0.2" y="6.8" width="13.2" height="4.4" fill="#ededed" /><line x1="1.6" y1="8.6" x2="1.6" y2="11.2" stroke="#444" stroke-width="0.7" /><line x1="3.2" y1="8.6" x2="3.2" y2="11.2" stroke="#444" stroke-width="0.7" /><line x1="4.800000000000001" y1="8.6" x2="4.800000000000001" y2="11.2" stroke="#444" stroke-width="0.7" /><line x1="6.4" y1="8.6" x2="6.4" y2="11.2" stroke="#444" stroke-width="0.7" /><line x1="8.0" y1="8.6" x2="8.0" y2="11.2" stroke="#444" stroke-width="0.7" /><line x1="9.6" y1="8.6" x2="9.6" y2="11.2" stroke="#444" stroke-width="0.7" /><line x1="11.200000000000001" y1="8.6" x2="11.200000000000001" y2="11.2" stroke="#444" stroke-width="0.7" /><line x1="12.8" y1="8.6" x2="12.8" y2="11.2" stroke="#444" stroke-width="0.7" /></g>
<path d="M716.3 22H719.7L718 24.5Z" fill="#c8c8c8"/>
<g transform="translate(728 16)"><path d="M1 0H13A1 1 0 0 1 14 1V7A1 1 0 0 1 13 8H6L3.4 11.6V8H1A1 1 0 0 1 0 7V1A1 1 0 0 1 1 0Z" fill="#f7ea80" /><circle cx="3.4" cy="11.6" r="1.4" fill="#6fae5a" /></g>
<g transform="translate(749 16)"><path d="M1 0H14V9H5L1.4 12.4L2.6 9H1Z" fill="#f4f6f6" stroke="#9ab" stroke-width="0.5" /><text x="5" y="8" fill="#222" font-size="8.6" font-family="Liberation Serif, serif">T</text></g>
<path d="M769.3 22H772.7L771 24.5Z" fill="#c8c8c8"/>
<rect x="2" y="43" width="1" height="7.5" fill="#555"/>
<g transform="translate(6 39.5)"><path d="M0.4 5.4L3 4L2.4 1.2L5.4 2.6L8 0.8L8.4 4L11.2 5.6L8.6 7.4L9 10.8L5.8 9.4L3 11.6L3 8Z" fill="#e0742a" /><rect x="2.2" y="2.4" width="7.8" height="9.2" fill="#f3cf3a" rx="0" stroke="#e6b820" stroke-width="0.5" transform="rotate(-8 6 7)"/><rect x="6" y="0.8" width="8" height="8.6" fill="#5b93d6" transform="rotate(8 10 5)"/><rect x="9.4" y="9.2" width="5.6" height="5.6" fill="#3f9a44" /><line x1="10" y1="12" x2="14.4" y2="12" stroke="#f4f4f4" stroke-width="1.4" /><line x1="12.2" y1="9.8" x2="12.2" y2="14.2" stroke="#f4f4f4" stroke-width="1.4" /></g>
<g transform="translate(28 39.5)"><path d="M0 5.6L7 3.4L14 5.6V11L7 14.4L0 11Z" fill="#e9c232" /><path d="M0 5.6L7 8V14.4L0 11Z" fill="#d3aa18" /><circle cx="7.2" cy="4.6" r="4.6" fill="#5a93d8" /><path d="M4 3.4C5.4 2 7 3.6 8.4 2.4M4.6 6.2C6 5 7.6 6.8 10 5.4" fill="none" stroke="#bcd6f2" stroke-width="1.1" /><rect x="8.4" y="8.2" width="6.4" height="6.4" fill="#d2a70f" rx="1" /><line x1="9.400000000000002" y1="11.399999999999999" x2="13.8" y2="11.399999999999999" stroke="#fff" stroke-width="1.1" /><line x1="11.600000000000001" y1="9.2" x2="11.600000000000001" y2="13.599999999999998" stroke="#fff" stroke-width="1.1" /><line x1="10.000000000000002" y1="9.799999999999999" x2="13.200000000000001" y2="12.999999999999998" stroke="#fff6d0" stroke-width="0.8" /><line x1="10.000000000000002" y1="12.999999999999998" x2="13.200000000000001" y2="9.799999999999999" stroke="#fff6d0" stroke-width="0.8" /></g>
<g transform="translate(50 39.5)"><path d="M1 1.4L5.6 11.2L9.4 1.4" fill="none" stroke="#2f456a" stroke-width="0.9" /><rect x="0.2" y="0.4" width="1.6" height="1.8" fill="#e8e8e8" /><rect x="8.4" y="0.4" width="1.6" height="1.8" fill="#e8e8e8" /><rect x="12" y="0.4" width="1.6" height="1.8" fill="#e8e8e8" /><rect x="4.8" y="10.4" width="1.6" height="1.8" fill="#e8e8e8" /><rect x="8" y="9" width="6.6" height="5" fill="#d2a70f" rx="1" /><line x1="9.100000000000001" y1="10.1" x2="13.5" y2="12.9" stroke="#fff" stroke-width="0.9" /><line x1="9.100000000000001" y1="12.9" x2="13.5" y2="10.1" stroke="#fff" stroke-width="0.9" /><line x1="8.9" y1="11.5" x2="13.700000000000001" y2="11.5" stroke="#fff" stroke-width="0.9" /></g>
<g transform="translate(71 39.5)"><path d="M0.4 14C2 8 6 2.4 13.8 0.2C13.6 4 11 8.6 4.6 9.8C3.4 10.6 2 12.4 1.2 14.2Z" fill="#6f9fd8" /><path d="M1 13.4C4 8 8 4 13 1" fill="none" stroke="#d7e6f6" stroke-width="0.7" /><rect x="8.6" y="9" width="6" height="6" fill="#d2a70f" rx="1" /><line x1="9.399999999999999" y1="12.0" x2="13.8" y2="12.0" stroke="#fff" stroke-width="1.1" /><line x1="11.6" y1="9.8" x2="11.6" y2="14.2" stroke="#fff" stroke-width="1.1" /><line x1="10.0" y1="10.4" x2="13.2" y2="13.6" stroke="#fff6d0" stroke-width="0.8" /><line x1="10.0" y1="13.6" x2="13.2" y2="10.4" stroke="#fff6d0" stroke-width="0.8" /></g>
<g transform="translate(92 39.5)"><rect x="1.4" y="4" width="11" height="6.6" fill="#5b8fd0" rx="0.6" /><line x1="3.8" y1="1.6" x2="3.8" y2="4" stroke="#3f6fae" stroke-width="0.9" /><line x1="5.6" y1="1.6" x2="5.6" y2="4" stroke="#3f6fae" stroke-width="0.9" /><line x1="3.8" y1="10.6" x2="3.8" y2="13" stroke="#3f6fae" stroke-width="0.9" /><line x1="5.6" y1="10.6" x2="5.6" y2="13" stroke="#3f6fae" stroke-width="0.9" /><rect x="8.8" y="8.8" width="6" height="6" fill="#d2a70f" rx="1" /><line x1="9.600000000000001" y1="11.8" x2="14.0" y2="11.8" stroke="#fff" stroke-width="1.1" /><line x1="11.8" y1="9.600000000000001" x2="11.8" y2="14.0" stroke="#fff" stroke-width="1.1" /><line x1="10.200000000000001" y1="10.200000000000001" x2="13.4" y2="13.4" stroke="#fff6d0" stroke-width="0.8" /><line x1="10.200000000000001" y1="13.4" x2="13.4" y2="10.200000000000001" stroke="#fff6d0" stroke-width="0.8" /></g>
<g transform="translate(116 39.1)"><rect x="0" y="0" width="14" height="14.4" fill="#c6d9ef" stroke="#6a9ad2" stroke-width="0.9" /><rect x="1.4" y="1.2" width="8.6" height="9" fill="#e2ecf7" /><path d="M2.6 1.6C2.4 6 4 10 6.4 11.6C8 9 9 5 9 1.6" fill="none" stroke="#24477a" stroke-width="1.0" /><circle cx="5.8" cy="11.6" r="1.5" fill="#eef4fb" stroke="#24477a" stroke-width="0.8" /><line x1="11" y1="1" x2="11" y2="8" stroke="#d9e8f6" stroke-width="0.8" /><rect x="8.8" y="10" width="6.4" height="5" fill="#d2a70f" rx="1" /><line x1="9.8" y1="11.1" x2="14.2" y2="13.9" stroke="#fff" stroke-width="0.9" /><line x1="9.8" y1="13.9" x2="14.2" y2="11.1" stroke="#fff" stroke-width="0.9" /><line x1="9.6" y1="12.5" x2="14.4" y2="12.5" stroke="#fff" stroke-width="0.9" /></g>
<rect x="138" y="43" width="1.3" height="8" fill="#4c4c4c"/>
<g transform="translate(144 39.5)"><line x1="3.2" y1="12" x2="8.4" y2="1.6" stroke="#5c5a55" stroke-width="3.2" /><line x1="8.2" y1="12.4" x2="12.6" y2="3" stroke="#56544f" stroke-width="2.8" /><path d="M2 12.4L1.4 14.6L3.6 13.4Z" fill="#4a4a4a" /><path d="M10.4 13L12.2 13L11.3 14.4Z" fill="#555" /></g>
<g transform="translate(165 39.5)"><line x1="3.4" y1="11.6" x2="10.6" y2="1.6" stroke="#5e5c57" stroke-width="3" /><path d="M1.6 12L1 14.6L3.8 13.6Z" fill="#4c4c4a" /></g>
<g transform="translate(186 40.1)"><rect x="0" y="0" width="11.4" height="12.4" fill="#555553" rx="0.6" /><rect x="2" y="0.8" width="7.4" height="4.6" fill="#646462" /><rect x="2.6" y="7.6" width="6" height="4.8" fill="#484846" /><line x1="7.6" y1="12" x2="13.6" y2="5.4" stroke="#5e5c57" stroke-width="2.2" /></g>
<g transform="translate(208 39.5)"><rect x="1.4" y="0.6" width="1.6" height="1.6" fill="#555" /><rect x="7" y="0" width="2.4" height="2.4" fill="#5c5c5a" /><rect x="12.4" y="1.4" width="1.4" height="1.4" fill="#505050" /><rect x="2.8" y="6.6" width="8.6" height="6.6" fill="#4b4b49" rx="1" /><line x1="4" y1="9.6" x2="10.4" y2="9.6" stroke="#65605c" stroke-width="1.6" /><rect x="0" y="6" width="1.2" height="1.2" fill="#4a4a4a" /></g>
<g transform="translate(229 39.5)"><line x1="1" y1="2" x2="2" y2="2" stroke="#666" stroke-width="1.8" /><line x1="3.4" y1="2" x2="4.4" y2="2" stroke="#666" stroke-width="1.8" /><line x1="5.6" y1="2" x2="12" y2="2" stroke="#4e4e4c" stroke-width="1" /><line x1="3" y1="13" x2="12" y2="5.4" stroke="#5d5a52" stroke-width="2" /><line x1="4" y1="6" x2="11.6" y2="13.2" stroke="#56544f" stroke-width="1.8" /></g>
<rect x="250" y="45.6" width="2.2" height="2.2" fill="#e6e6e6"/>
<g transform="translate(260 39.5)"><rect x="0" y="1.0" width="12.6" height="2.6" fill="#5a574e" /><rect x="0" y="4.8" width="12.6" height="2.6" fill="#5a574e" /><rect x="0" y="8.6" width="12.6" height="2.6" fill="#5a574e" /><line x1="4.4" y1="1" x2="4.4" y2="11" stroke="#3a3a38" stroke-width="0.7" /><line x1="4.6" y1="12.6" x2="11.6" y2="0.6" stroke="#77756f" stroke-width="1.6" /><path d="M4 12L3.6 14L5.6 13.2Z" fill="#8a8a8a" /></g>
<g transform="translate(281 39.5)"><rect x="0.6" y="1" width="9.6" height="11.6" fill="#3f3a38" stroke="#5e4742" stroke-width="0.8" /><rect x="2.8" y="4.4" width="8.6" height="9.4" fill="#565654" stroke="#5a4440" stroke-width="0.6" /><line x1="4.8" y1="6" x2="4.8" y2="12.6" stroke="#3c3c3a" stroke-width="1" /><line x1="7.2" y1="6" x2="7.2" y2="12.6" stroke="#3c3c3a" stroke-width="1" /><line x1="9.6" y1="6" x2="9.6" y2="12.6" stroke="#3c3c3a" stroke-width="1" /><line x1="2.2" y1="3.4" x2="12" y2="3.4" stroke="#6a5a54" stroke-width="1" /></g>
<g transform="translate(302 39.5)"><line x1="0.4" y1="2.6" x2="11" y2="8.4" stroke="#66635c" stroke-width="1" /><line x1="0.4" y1="8" x2="11" y2="6.4" stroke="#66635c" stroke-width="1" /><circle cx="12.4" cy="5.6" r="1.5" fill="none" stroke="#4c4540" stroke-width="0.9" /><circle cx="12.4" cy="10" r="1.5" fill="none" stroke="#4c4540" stroke-width="0.9" /></g>
<g transform="translate(324 39.5)"><path d="M3.6 0.4H9L11 2.4V10.4H3.6Z" fill="#4c4c4e" stroke="#5e5e60" stroke-width="0.7" /><path d="M0.4 3.4H6L8 5.4V14H0.4Z" fill="#5a5a5c" stroke="#68686a" stroke-width="0.7" /><line x1="1.8" y1="7.6" x2="6.6" y2="7.6" stroke="#3c3c3e" stroke-width="0.9" /><line x1="1.8" y1="10.4" x2="6.6" y2="10.4" stroke="#3c3c3e" stroke-width="0.9" /></g>
<g transform="translate(346 39.5)"><rect x="0.4" y="1" width="10.4" height="13" fill="#58585a" rx="0.6" /><rect x="3" y="0" width="5" height="2.2" fill="#6a6a6c" /><rect x="2" y="3.4" width="7.2" height="9.4" fill="#474749" /><line x1="3" y1="5.6" x2="8" y2="5.6" stroke="#66605a" stroke-width="0.9" /><line x1="3" y1="8" x2="8" y2="8" stroke="#66605a" stroke-width="0.9" /><line x1="3" y1="10.4" x2="8" y2="10.4" stroke="#66605a" stroke-width="0.9" /></g>
<g transform="translate(367 39.5)"><path d="M0.4 5.4L5.4 0.8V3.8C10.6 3.8 13.6 7 12.4 12.6C11.6 9.4 9.4 7.6 5.4 7.6V10.4Z" fill="#5b554f" /></g>
<g transform="translate(388 39.5)"><path d="M13.6 5.4L8.6 0.8V3.8C3.4 3.8 0.4 7 1.6 12.6C2.4 9.4 4.6 7.6 8.6 7.6V10.4Z" fill="#54585a" /></g>
<rect x="409" y="43" width="1.3" height="8" fill="#4c4c4c"/>
<g transform="translate(414 40.5)"><path d="M0 4.4L3 1H13.4V7.8H3Z" fill="#5c5950" /><text x="3.6" y="6.6" fill="#3e3c38" font-size="5.6" font-family="Liberation Sans, sans-serif" font-weight="bold">abc</text></g>
<g transform="translate(437 39.5)"><rect x="1" y="0" width="2.6" height="4" fill="#55534c" /><rect x="3" y="3.4" width="2.6" height="5" fill="#4c4f48" /><rect x="1" y="8" width="3.4" height="6" fill="#565650" /><rect x="6" y="6" width="2" height="4" fill="#4c4846" /></g>
<rect x="454" y="43" width="1.3" height="8" fill="#4c4c4c"/>
<g transform="translate(459 40.5)"><path d="M0 4.4L3 1H13V7.8H3Z" fill="#f4f6fa" stroke="#4d86d0" stroke-width="1" /><text x="3.6" y="6.5" fill="#2b4f86" font-size="5.4" font-family="Liberation Sans, sans-serif" font-weight="bold">abc</text><circle cx="12" cy="10.6" r="2.6" fill="#d42a2a" /><circle cx="12" cy="10.6" r="1" fill="#8a1010" /></g>
<g transform="translate(481 40.5)"><path d="M0 4.4L3 1H13.6V7.8H3Z" fill="#e8141c" /><rect x="3.2" y="2.2" width="9.2" height="4.4" fill="#fbeaea" /><text x="3.6" y="6.3" fill="#e0141c" font-size="5.4" font-family="Liberation Sans, sans-serif" font-weight="bold">abc</text></g>
<rect x="500" y="43" width="1.3" height="8" fill="#4c4c4c"/>
<g transform="translate(506 40.5)"><path d="M0 4.4L3 1H13.4V7.8H3Z" fill="#5c5950" /><text x="3.6" y="6.6" fill="#3e3c38" font-size="5.6" font-family="Liberation Sans, sans-serif" font-weight="bold">abc</text><rect x="9.4" y="7.6" width="3" height="4.4" fill="#55504a" /></g>
<g transform="translate(527 40.5)"><path d="M0 4.4L3 1H13.4V7.8H3Z" fill="#5c5950" /><text x="3.6" y="6.6" fill="#3e3c38" font-size="5.6" font-family="Liberation Sans, sans-serif" font-weight="bold">abc</text><circle cx="7.6" cy="10.6" r="1.3" fill="none" stroke="#77736c" stroke-width="0.8" /></g>
<g transform="translate(548 40.5)"><path d="M0 4.4L3 1H13.4V7.8H3Z" fill="#5c5950" /><text x="3.6" y="6.6" fill="#3e3c38" font-size="5.6" font-family="Liberation Sans, sans-serif" font-weight="bold">abc</text><rect x="8.4" y="8.6" width="4.6" height="3.4" fill="#66666a" /></g>
<g transform="translate(569 40.5)"><path d="M0 4.4L3 1H13.4V7.8H3Z" fill="#5c5950" /><text x="3.6" y="6.6" fill="#3e3c38" font-size="5.6" font-family="Liberation Sans, sans-serif" font-weight="bold">abc</text><circle cx="11.4" cy="10.6" r="1.9" fill="none" stroke="#6a6a66" stroke-width="0.9" /></g>
<g transform="translate(590 40.5)"><path d="M0 4.4L3 1H13.4V7.8H3Z" fill="#5c5950" /><text x="3.6" y="6.6" fill="#3e3c38" font-size="5.6" font-family="Liberation Sans, sans-serif" font-weight="bold">abc</text><line x1="9" y1="12" x2="13.4" y2="7.6" stroke="#6e6c66" stroke-width="1.6" /></g>
<rect x="613" y="43" width="1.3" height="8" fill="#4c4c4c"/>
<g transform="translate(618 38.9)"><circle cx="7.2" cy="6.6" r="6.5" fill="#6f9fdc" /><circle cx="7.2" cy="6.6" r="6.5" fill="none" stroke="#a9c8ee" stroke-width="0.8" /><path d="M2.6 3.6C4.6 1.6 7 3 5.8 5.4C4.6 7.4 3 6.6 2.4 9M8.4 1.4C10 2.6 11 4 12.8 4.4M8.4 6C10 4.8 11.8 6 11.4 8" fill="none" stroke="#e6eef8" stroke-width="1.8" /><rect x="1.6" y="10" width="4.6" height="4.6" fill="#0a0a0a" rx="1.6" /><rect x="8.4" y="10" width="4.6" height="4.6" fill="#0a0a0a" rx="1.6" /><rect x="5.4" y="10.6" width="3.8" height="2.2" fill="#0a0a0a" /><rect x="3.2" y="8.2" width="2.6" height="3" fill="#0a0a0a" rx="0.8" /><rect x="8.8" y="8.2" width="2.6" height="3" fill="#0a0a0a" rx="0.8" /></g>
<rect x="640" y="43" width="1.3" height="8" fill="#4c4c4c"/>
<g transform="translate(645 39.5)"><path d="M6.8 0C3.6 0 3.8 1.4 3.8 1.4V3.6H7V4.4H2.2C2.2 4.4 0 4.2 0 7.4C0 10.6 2 10.4 2 10.4H3.4V8.4C3.4 8.4 3.4 6.6 5.4 6.6H8.6C8.6 6.6 10.2 6.6 10.2 4.8V1.8C10.2 1.8 10.6 0 6.8 0Z" fill="#3f7cc0" /><path d="M7.4 14.4C10.6 14.4 10.4 13 10.4 13V10.8H7.2V10H12C12 10 14.2 10.2 14.2 7C14.2 3.8 12.2 4 12.2 4H10.8V6C10.8 6 10.8 7.8 8.8 7.8H5.6C5.6 7.8 4 7.8 4 9.6V12.6C4 12.6 3.6 14.4 7.4 14.4Z" fill="#f3cc3c" /><circle cx="5.4" cy="1.7" r="0.6" fill="#fff" /><circle cx="8.8" cy="12.7" r="0.6" fill="#fff" /></g>
<g transform="translate(666 39.5)"><path d="M2.4 8.8C0.6 4 5.6 -0.6 10.2 1.6C14.2 3.8 14.4 9.4 10.6 12.4L9 10.4C11.4 8.4 11.2 5.4 9 4.2C6.6 3 4 5 4.8 7.8L6.8 7.2L5.6 12.6L0.4 9.6Z" fill="#3d8be0" /><path d="M9 10.4L10.6 12.4L7.4 13.8Z" fill="#7ab6f4" /></g>
<path d="M686.5 45.8H689.5V48.8Z" fill="#d8d8d8"/>
<g transform="translate(697 39.5)"><path d="M4.4 3.4A2.8 2.6 0 0 1 9.8 3.4Z" fill="#080808" /><path d="M3.2 4.4H11V10.4A3.9 4 0 0 1 3.2 10.4Z" fill="#080808" /><line x1="3.4" y1="6" x2="0.4" y2="4.4" stroke="#080808" stroke-width="1.1" /><line x1="3.4" y1="8.4" x2="0" y2="8.4" stroke="#080808" stroke-width="1.1" /><line x1="3.6" y1="10.8" x2="0.6" y2="13" stroke="#080808" stroke-width="1.1" /><line x1="10.8" y1="6" x2="13.8" y2="4.4" stroke="#080808" stroke-width="1.1" /><line x1="10.8" y1="8.4" x2="14.2" y2="8.4" stroke="#080808" stroke-width="1.1" /><line x1="10.6" y1="10.8" x2="13.6" y2="13" stroke="#080808" stroke-width="1.1" /><line x1="7.1" y1="4.6" x2="7.1" y2="14" stroke="#3a3a3a" stroke-width="0.6" /><line x1="5" y1="1.4" x2="6" y2="2.6" stroke="#080808" stroke-width="0.8" /><line x1="9.2" y1="1.4" x2="8.2" y2="2.6" stroke="#080808" stroke-width="0.8" /></g>
<rect x="719" y="43" width="1.3" height="8" fill="#4c4c4c"/>
<g transform="translate(727 39.9)"><rect x="0" y="0" width="10" height="13.4" fill="#4e4e4e" rx="0.6" /><text x="2.6" y="10.4" fill="#6c6c6c" font-size="10" font-family="Liberation Sans, sans-serif" font-weight="bold">?</text></g>
<rect x="746" y="43" width="1.3" height="8" fill="#4c4c4c"/>
<g stroke="#5c5c5c" stroke-width="0.8" fill="none"><rect x="113.4" y="62.2" width="5.4" height="5.4" rx="0.4"/><path d="M113.6 62.4L118.6 67.4M118.6 62.4L113.6 67.4" stroke="#727272" stroke-width="0.9"/></g>
<g stroke="#5c5c5c" stroke-width="0.8" fill="none"><rect x="113.4" y="410.2" width="5.4" height="5.4" rx="0.4"/><path d="M113.6 410.4L118.6 415.4M118.6 410.4L113.6 415.4" stroke="#727272" stroke-width="0.9"/></g>
<g stroke="#5c5c5c" stroke-width="0.8" fill="none"><rect x="879.1999999999999" y="545.4000000000001" width="5.4" height="5.4" rx="0.4"/><path d="M879.4 545.6L884.4 550.6M884.4 545.6L879.4 550.6" stroke="#727272" stroke-width="0.9"/></g>
<g stroke="#5c5c5c" stroke-width="0.8" fill="none"><rect x="1192.2" y="61.800000000000004" width="5.4" height="5.4" rx="0.4"/><path d="M1192.3999999999999 62.0L1197.3999999999999 67.0M1197.3999999999999 62.0L1192.3999999999999 67.0" stroke="#727272" stroke-width="0.9"/></g>
<g transform="translate(4.2 76.9)"><rect x="0" y="0" width="6.8" height="6.8" fill="#efefe9" stroke="#c9c9c0" stroke-width="0.6" /><rect x="4.8" y="5" width="3.8" height="3.8" fill="#6fae62" /><line x1="5.4" y1="6.9" x2="8" y2="6.9" stroke="#e8f4e4" stroke-width="0.8" /><line x1="6.7" y1="5.6" x2="6.7" y2="8.2" stroke="#e8f4e4" stroke-width="0.8" /></g>
<g transform="translate(20.6 76.7)"><path d="M0.6 4.2A4 4 0 0 1 7.6 2L8.6 0.8V4.4H5L6.2 3.2A2.2 2.2 0 0 0 2.4 4.2Z" fill="#3f8ad8" /><path d="M8.4 5.2A4 4 0 0 1 1.4 7.4L0.4 8.6V5H4L2.8 6.2A2.2 2.2 0 0 0 6.6 5.2Z" fill="#3f8ad8" /></g>
<g transform="translate(37.4 76.5)"><rect x="0" y="0" width="8.4" height="1.3" fill="#f2d43a" /><path d="M0.2 1.8H8.2L5.2 5V9.4H3.2V5Z" fill="#4a8fdc" /></g>
<g transform="translate(53 76.5)"><line x1="0" y1="1.2" x2="4.4" y2="1.2" stroke="#d6d6d6" stroke-width="1" /><line x1="2" y1="4.4" x2="4.4" y2="4.4" stroke="#d6d6d6" stroke-width="1" /><line x1="3" y1="7.4" x2="4.4" y2="7.4" stroke="#e89a1c" stroke-width="1.2" /><line x1="6.6" y1="2" x2="6.6" y2="9.6" stroke="#4a8fdc" stroke-width="1.4" /><path d="M4.2 3.4L6.6 0.2L9 3.4Z" fill="#4a8fdc" /></g>
<g transform="translate(69.4 76.5)"><circle cx="4.4" cy="4.6" r="4.4" fill="#5b9ae0" /><line x1="4.4" y1="3.8" x2="4.4" y2="8" stroke="#eef5fc" stroke-width="1.3" /><circle cx="4.4" cy="2.2" r="0.8" fill="#eef5fc" /></g>
<path d="M5.3999999999999995 97.8H9.0L7.199999999999999 101.0Z" fill="#585858"/>
<path d="M18.6 110.95L21.8 112.75L18.6 114.55Z" fill="#585858"/>
<path d="M18.6 124.7L21.8 126.5L18.6 128.3Z" fill="#585858"/>
<path d="M5.6 138.45L8.8 140.25L5.6 142.05Z" fill="#585858"/>
<path d="M5.6 152.2L8.8 154.0L5.6 155.8Z" fill="#585858"/>
<path d="M5.6 165.95L8.8 167.75L5.6 169.55Z" fill="#585858"/>
<path d="M5.6 179.7L8.8 181.5L5.6 183.3Z" fill="#585858"/>
<path d="M5.6 289.7L8.8 291.5L5.6 293.3Z" fill="#585858"/>
<g transform="translate(15.8 93.8) scale(0.94)"><path d="M5.2 0L6.7 3.4L10.4 3.8L7.6 6.3L8.4 10L5.2 8.1L2 10L2.8 6.3L0 3.8L3.7 3.4Z" fill="#f7e03c" stroke="#c9a410" stroke-width="0.5" /></g>
<g transform="translate(29.4 108.15) scale(0.94)"><path d="M0 0.4H4L5 1.8H10V9.4H0Z" fill="#f2f2f2" /><path d="M0 2.6H10" fill="none" stroke="#d0d0d0" stroke-width="0.5" /></g>
<g transform="translate(29.4 121.9) scale(0.94)"><path d="M0 0.4H4L5 1.8H10V9.4H0Z" fill="#f2f2f2" /><path d="M0 2.6H10" fill="none" stroke="#d0d0d0" stroke-width="0.5" /></g>
<g transform="translate(16 135.65) scale(0.94)"><path d="M0.4 0H10V8.4H2V10L0.4 8.8Z" fill="#ebebeb" /><path d="M0.4 0H2.2V8.4L2 10L0.4 8.8Z" fill="#d2d2d2" /><path d="M5.6 0H8V4.6L6.8 3.4L5.6 4.6Z" fill="#3f74b8" /></g>
<g transform="translate(16 149.4) scale(0.94)"><path d="M0 0.4H4L5 1.8H10V9.6H0Z" fill="#58a838" /><rect x="0.8" y="3" width="8.4" height="5.8" fill="#d8d83a" /><path d="M1.4 3.6L4 6L2.4 8.2M5.4 3.4C7.4 4 8.4 6 7 8" fill="none" stroke="#2c8a2c" stroke-width="1.1" /><circle cx="6.6" cy="5.2" r="1.3" fill="#2c8a2c" /></g>
<g transform="translate(16 163.15) scale(0.94)"><path d="M0 0.4H4L5 1.8H10V9.6H0Z" fill="#f2f2f2" /><path d="M2.4 6L5 3.6L7.6 6V8.8H2.4Z" fill="#f2f2f2" stroke="#222" stroke-width="0.9" /><rect x="4.2" y="6.8" width="1.6" height="2" fill="#222" /></g>
<g transform="translate(16 176.9) scale(0.94)"><path d="M0 0.4H4L5 1.8H10V9.4H0Z" fill="#f2f2f2" /><path d="M0 2.6H10" fill="none" stroke="#d0d0d0" stroke-width="0.5" /></g>
<g transform="translate(16 190.65) scale(0.94)"><path d="M0 4.6L5 3L10 4.6V8L5 10.4L0 8Z" fill="#e9c232" /><path d="M0 4.6L5 6.4V10.4L0 8Z" fill="#d3aa18" /><circle cx="5.2" cy="3.6" r="3.5" fill="#4f8fdc" /><path d="M3 2.6C4 1.6 5.2 2.8 6.2 2M3.4 4.8C4.4 4 5.6 5.2 7.4 4.2" fill="none" stroke="#cfe2f6" stroke-width="0.9" /></g>
<g transform="translate(16 204.4) scale(0.94)"><path d="M0.2 10C1.4 5.6 4.4 1.8 9.8 0.2C9.6 3 7.8 6.2 3.4 7C2.4 7.6 1.4 8.8 0.8 10.2Z" fill="#5f95d6" /><path d="M0.8 9.4C3 5.6 5.6 3 9.2 0.8" fill="none" stroke="#d7e6f6" stroke-width="0.5" /></g>
<g transform="translate(16 218.15) scale(0.94)"><path d="M1 0.6C3 -0.4 7.4 -0.4 9.2 1C10.6 2.4 9.4 6 8.2 7L7.6 10H6.4L6 7.2C5.2 7.6 4.2 7.6 3.6 7.2L3.4 9.4H2L1.6 6.4C0.2 5 -0.2 2 1 0.6Z" fill="#4a86cc" /><line x1="6.2" y1="2.4" x2="6.2" y2="6.8" stroke="#a9c8ea" stroke-width="0.6" /><circle cx="3.2" cy="2.4" r="0.5" fill="#d7e6f6" /></g>
<g transform="translate(16 231.9) scale(0.94)"><path d="M0.4 0.4C3.4 0.2 6.6 2 9.8 5.4C6.6 5 4.4 6.4 3.6 9.8C3.6 6.6 2.6 3 0.4 0.4Z" fill="#4a86cc" /><path d="M2 1.6C4.6 2.6 6.6 4 8.4 5" fill="none" stroke="#bcd4f0" stroke-width="0.6" /><path d="M3 4C4 5 4.2 7 4 8.6" fill="none" stroke="#bcd4f0" stroke-width="0.6" /></g>
<g transform="translate(16 245.65) scale(0.94)"><rect x="0" y="0.8" width="10.4" height="8.2" fill="#4f8fdc" /><text x="1.0" y="6.4" fill="#e8f0fa" font-size="4.4" font-family="Liberation Sans, sans-serif" font-weight="bold">DB2</text></g>
<g transform="translate(16 259.4) scale(0.94)"><circle cx="5" cy="5" r="4.8" fill="#4f8fdc" /><path d="M2.2 2.4C3.6 1.4 5 2.6 4.2 4C3.4 5.2 2.2 5 1.6 6.4M6 1.4C7 2.2 7.8 3 9 3.4M6.4 5C7.4 4.2 8.4 5 8.2 6.2C8 7.6 6.8 8 6 7Z" fill="none" stroke="#e3eefa" stroke-width="1.1" /></g>
<g transform="translate(16 273.15) scale(0.94)"><rect x="0" y="0" width="10" height="10" fill="#2b4f86" /><rect x="0.7" y="0.7" width="2.4" height="2.4" fill="#f2f4f8" /><rect x="3.8" y="0.7" width="2.4" height="2.4" fill="#f2f4f8" /><rect x="6.9" y="0.7" width="2.4" height="2.4" fill="#f2f4f8" /><rect x="0.7" y="3.8" width="2.4" height="2.4" fill="#f2f4f8" /><rect x="3.8" y="3.8" width="2.4" height="2.4" fill="#f2f4f8" /><rect x="6.9" y="3.8" width="2.4" height="2.4" fill="#f2f4f8" /><rect x="0.7" y="6.9" width="2.4" height="2.4" fill="#f2f4f8" /><rect x="3.8" y="6.9" width="2.4" height="2.4" fill="#f2f4f8" /><rect x="6.9" y="6.9" width="2.4" height="2.4" fill="#f2f4f8" /></g>
<g transform="translate(16 286.9) scale(0.94)"><rect x="0" y="0" width="10" height="10" fill="#2a3f5c" /><rect x="0.7" y="0.7" width="2.4" height="2.4" fill="#5b95dc" /><rect x="3.8" y="0.7" width="2.4" height="2.4" fill="#5b95dc" /><rect x="6.9" y="0.7" width="2.4" height="2.4" fill="#5b95dc" /><rect x="0.7" y="3.8" width="2.4" height="2.4" fill="#5b95dc" /><rect x="3.8" y="3.8" width="2.4" height="2.4" fill="#5b95dc" /><rect x="6.9" y="3.8" width="2.4" height="2.4" fill="#5b95dc" /><rect x="0.7" y="6.9" width="2.4" height="2.4" fill="#5b95dc" /><rect x="3.8" y="6.9" width="2.4" height="2.4" fill="#5b95dc" /><rect x="6.9" y="6.9" width="2.4" height="2.4" fill="#5b95dc" /></g>
<g transform="translate(16 300.65) scale(0.94)"><circle cx="5" cy="5" r="4.8" fill="#4f8fdc" /><path d="M1 3.4H9M1 6.8H9" fill="none" stroke="#f2f6fc" stroke-width="1.4" /><path d="M3 5L5 8.8L7 5Z" fill="#f2f6fc" /></g>
<g transform="translate(16 314.4) scale(0.94)"><circle cx="5" cy="5" r="4.8" fill="none" /><path d="M0.4 5H9.6M5 0.2V9.8M1.4 2.2C3.6 3.4 6.4 3.4 8.6 2.2M1.4 7.8C3.6 6.6 6.4 6.6 8.6 7.8" fill="none" stroke="#4a86cc" stroke-width="0.6" /><path d="M5 0.2C2.6 2.6 2.6 7.4 5 9.8C7.4 7.4 7.4 2.6 5 0.2" fill="none" stroke="#4a86cc" stroke-width="0.6" /><circle cx="5" cy="5" r="4.6" fill="none" stroke="#4a86cc" stroke-width="0.7" /></g>
<g transform="translate(16 328.15) scale(0.94)"><circle cx="5" cy="5" r="4.8" fill="none" /><path d="M0.4 5H9.6M5 0.2V9.8M1.4 2.2C3.6 3.4 6.4 3.4 8.6 2.2M1.4 7.8C3.6 6.6 6.4 6.6 8.6 7.8" fill="none" stroke="#3f78be" stroke-width="0.6" /><path d="M5 0.2C2.6 2.6 2.6 7.4 5 9.8C7.4 7.4 7.4 2.6 5 0.2" fill="none" stroke="#3f78be" stroke-width="0.6" /><circle cx="5" cy="5" r="4.6" fill="none" stroke="#3f78be" stroke-width="0.7" /></g>
<g transform="translate(16 341.9) scale(0.94)"><circle cx="5" cy="5" r="4.8" fill="#4f8fdc" /><path d="M2 7.4C3 4 5 2.4 8.4 1.6C8 4.4 6 6.6 2 7.4Z" fill="#eaf2fb" /></g>
<g transform="translate(16 355.65) scale(0.94)"><circle cx="5" cy="5" r="4.3" fill="none" stroke="#9aa8b8" stroke-width="0.8" stroke-dasharray="1.6 1"/><rect x="2.6" y="3.4" width="4.8" height="3.6" fill="#d9dde2" /><line x1="1" y1="5.2" x2="9" y2="5.2" stroke="#5b7fa8" stroke-width="0.7" /></g>
<g transform="translate(16 369.4) scale(0.94)"><line x1="5" y1="5" x2="8.98" y2="7.3" stroke="#4f8fdc" stroke-width="1.3" /><circle cx="8.81" cy="7.2" r="0.9" fill="#4f8fdc" /><line x1="5" y1="5" x2="5.0" y2="9.6" stroke="#4f8fdc" stroke-width="1.3" /><circle cx="5.0" cy="9.4" r="0.9" fill="#4f8fdc" /><line x1="5" y1="5" x2="1.02" y2="7.3" stroke="#4f8fdc" stroke-width="1.3" /><circle cx="1.19" cy="7.2" r="0.9" fill="#4f8fdc" /><line x1="5" y1="5" x2="1.02" y2="2.7" stroke="#4f8fdc" stroke-width="1.3" /><circle cx="1.19" cy="2.8" r="0.9" fill="#4f8fdc" /><line x1="5" y1="5" x2="5.0" y2="0.4" stroke="#4f8fdc" stroke-width="1.3" /><circle cx="5.0" cy="0.6" r="0.9" fill="#4f8fdc" /><line x1="5" y1="5" x2="8.98" y2="2.7" stroke="#4f8fdc" stroke-width="1.3" /><circle cx="8.81" cy="2.8" r="0.9" fill="#4f8fdc" /></g>
<rect x="1.2" y="422" width="1" height="15" fill="#e08a1e"/><rect x="16.2" y="422" width="1" height="15" fill="#e08a1e"/>
<g transform="translate(4.2 424.6)"><path d="M0.6 4.6L5 2.2L8.4 5.4L3.6 8.4Z" fill="#f2c832" /><path d="M0.6 4.6L3.6 8.4L2.4 9L0 5.6Z" fill="#d2431f" /><path d="M2 2.8L5.4 1.4L6.4 2.6L3.4 4Z" fill="#4f8fdc" /><line x1="5.4" y1="4.6" x2="9.2" y2="0.6" stroke="#e8a01c" stroke-width="1.3" /></g>
<g transform="translate(21.4 424.20000000000005)"><rect x="1.4" y="0.2" width="5.8" height="7.6" fill="#e9e9e9" rx="0.5" /><rect x="2.6" y="2" width="3.2" height="4" fill="#3f74b8" /><line x1="0" y1="9.2" x2="6" y2="9.2" stroke="#dcdcdc" stroke-width="0.9" /><rect x="5.4" y="6.4" width="2.8" height="3.4" fill="#57b04a" /></g>
<g transform="translate(36.6 425.0)"><path d="M0.2 4C2.4 0.2 7.6 0.2 9.8 4C7.6 7.8 2.4 7.8 0.2 4Z" fill="#dfe5ee" /><circle cx="5" cy="3.8" r="2.5" fill="#4a86d0" /><circle cx="5" cy="3.8" r="1.1" fill="#1c3a66" /><path d="M7 6.6L9.6 8.6" fill="none" stroke="#9a9a9a" stroke-width="1.2" /></g>
<g transform="translate(53.2 424.6)"><rect x="0" y="0" width="8.4" height="1.3" fill="#f2d43a" /><path d="M0.2 1.8H8.2L5.2 5V9.4H3.2V5Z" fill="#4a8fdc" /></g>
<g transform="translate(70 425.0)"><line x1="0.4" y1="0.4" x2="3.6" y2="3.6" stroke="#4e4e4e" stroke-width="1" /><rect x="4" y="4.4" width="5" height="4.4" fill="#555" /></g>
<rect x="86" y="428" width="2" height="2" fill="#e2e2e2"/>
<g transform="translate(96 424.6)"><path d="M0.6 0.4V9.4M0.6 0.8H4" fill="none" stroke="#e6e6e6" stroke-width="1.1" /><rect x="2.4" y="2.6" width="1.8" height="1.8" fill="#e89a1c" /><rect x="2.4" y="6.4" width="1.8" height="1.8" fill="#e89a1c" /><line x1="6.4" y1="0" x2="6.4" y2="7" stroke="#4a8fdc" stroke-width="1.5" /><path d="M4 5.8L6.4 9.6L8.8 5.8Z" fill="#4a8fdc" /></g>
<g transform="translate(16 446.6)"><path d="M0.3 2.8C2 0 6 0 7.7 2.8C6 5.6 2 5.6 0.3 2.8Z" fill="none" stroke="#f4f4f4" stroke-width="0.9" /><circle cx="4" cy="2.6" r="1.2" fill="#f4f4f4" /></g>
<g transform="translate(29.2 445)"><rect x="0" y="0" width="9" height="9" fill="#8c7a5c" /><rect x="0" y="0" width="4" height="4" fill="#e6dcc8" /><rect x="4.6" y="0" width="4.4" height="5" fill="#f1ede4" /><rect x="0" y="4.8" width="4" height="4.2" fill="#6e5a3c" /><rect x="4.6" y="5.6" width="4.4" height="3.4" fill="#a8946c" /><line x1="3" y1="7" x2="8" y2="1" stroke="#7a5a3a" stroke-width="0.8" /></g>
<g transform="translate(84 442.6)"><circle cx="6.6" cy="6.6" r="4.6" fill="none" stroke="#6e5a48" stroke-width="0.9" /><path d="M6.6 3.8V6.8L8.6 8" fill="none" stroke="#6e5a48" stroke-width="0.9" /></g>
<g transform="translate(102 442.6)"><circle cx="6.6" cy="6.6" r="4.8" fill="none" stroke="#8a6a40" stroke-width="0.7" stroke-dasharray="2 1.2"/><text x="4.2" y="10" fill="#a06a2c" font-size="9" font-family="Liberation Sans, sans-serif" font-weight="bold">?</text></g>
<g transform="translate(390 559.4)"><path d="M0.6 4.4A4.2 4.2 0 0 1 8 2.2L9 1V4.8H5.2L6.4 3.6A2.4 2.4 0 0 0 2.4 4.4Z" fill="#3f8ad8" /><path d="M9 5.6A4.2 4.2 0 0 1 1.6 7.8L0.6 9V5.2H4.4L3.2 6.4A2.4 2.4 0 0 0 7.2 5.6Z" fill="#3f8ad8" /></g>
<g transform="translate(868 560)"><line x1="6.5" y1="5.0" x2="9.4" y2="5.0" stroke="#f2d42c" stroke-width="1.7" /><line x1="6.06" y1="6.06" x2="8.11" y2="8.11" stroke="#f2d42c" stroke-width="1.7" /><line x1="5.0" y1="6.5" x2="5.0" y2="9.4" stroke="#f2d42c" stroke-width="1.7" /><line x1="3.94" y1="6.06" x2="1.89" y2="8.11" stroke="#f2d42c" stroke-width="1.7" /><line x1="3.5" y1="5.0" x2="0.6" y2="5.0" stroke="#f2d42c" stroke-width="1.7" /><line x1="3.94" y1="3.94" x2="1.89" y2="1.89" stroke="#f2d42c" stroke-width="1.7" /><line x1="5.0" y1="3.5" x2="5.0" y2="0.6" stroke="#f2d42c" stroke-width="1.7" /><line x1="6.06" y1="3.94" x2="8.11" y2="1.89" stroke="#f2d42c" stroke-width="1.7" /><circle cx="5" cy="5" r="3.0" fill="#f2d42c" /><circle cx="5" cy="5" r="1.35" fill="#3a3520" /></g>
<path d="M252.9 561.576H256.3L254.6 559.376Z" fill="#c8c8c8"/><path d="M252.9 566.224H256.3L254.6 568.4240000000001Z" fill="#c8c8c8"/>
<path d="M375.90000000000003 561.576H379.3L377.6 559.376Z" fill="#c8c8c8"/><path d="M375.90000000000003 566.224H379.3L377.6 568.4240000000001Z" fill="#c8c8c8"/>
<path d="M528.6999999999999 561.576H532.1L530.4 559.376Z" fill="#c8c8c8"/><path d="M528.6999999999999 566.224H532.1L530.4 568.4240000000001Z" fill="#c8c8c8"/>
<path d="M614.3 563H617.7L616 565.5Z" fill="#c8c8c8"/>
<path d="M135.0 582.0V588.4000000000001L131.4 585.2ZM138.79999999999998 582.0V588.4000000000001L135.2 585.2Z" fill="#0c0c0c"/>
<rect x="155.6" y="582.0" width="1.2" height="6.4" fill="#0c0c0c"/><path d="M160.6 582.0V588.4000000000001L157 585.2Z" fill="#0c0c0c"/>
<path d="M183.6 582.0V588.4000000000001L179.4 585.2Z" fill="#0c0c0c"/>
<rect x="201.4" y="582.2" width="1.6" height="6" fill="#0c0c0c"/><rect x="204.8" y="582.2" width="1.6" height="6" fill="#0c0c0c"/>
<path d="M225.2 582.0V588.4000000000001L229.39999999999998 585.2Z" fill="#0c0c0c"/>
<path d="M247.4 582.0V588.4000000000001L251.0 585.2Z" fill="#0c0c0c"/><rect x="251.2" y="582.0" width="1.2" height="6.4" fill="#0c0c0c"/>
<path d="M269.4 582.0V588.4000000000001L273.0 585.2ZM273.2 582.0V588.4000000000001L276.8 585.2Z" fill="#0c0c0c"/>
<g transform="translate(8 612.6)"><circle cx="2.8" cy="2.8" r="2.3" fill="none" stroke="#999999" stroke-width="0.9" /><line x1="4.6" y1="4.6" x2="6.6" y2="6.6" stroke="#999999" stroke-width="1" /></g>
<g transform="translate(754 611.6)"><path d="M0.6 1L5 2.6L3 3.2L6 6.6L4.8 7.4L2.2 4L1.4 5.6Z" fill="#f0f0f0" /><circle cx="7" cy="6.4" r="2.6" fill="none" stroke="#e0e0e0" stroke-width="0.9" /><circle cx="7" cy="6.4" r="0.9" fill="#1a1a1a" /><rect x="4" y="0.4" width="2" height="2" fill="#111" /></g>
<path d="M856.3 615H859.7L858 617.5Z" fill="#bdbdbd"/>
<g transform="translate(872 611)"><path d="M1.8 4.4V2.8A2.4 2.4 0 0 1 6.6 2.8V4.4" fill="none" stroke="#8c8c8c" stroke-width="1.2" /><rect x="0.4" y="4.2" width="7.6" height="5.6" fill="#8c8c8c" rx="0.8" /></g>
<path d="M971.3 614.12H974.7L973 611.92Z" fill="#bdbdbd"/><path d="M971.3 618.88H974.7L973 621.08Z" fill="#bdbdbd"/>
<path d="M1067.3 614.12H1070.7L1069 611.92Z" fill="#bdbdbd"/><path d="M1067.3 618.88H1070.7L1069 621.08Z" fill="#bdbdbd"/>
<g transform="translate(1125.6 611.6)"><circle cx="4.4" cy="4.4" r="4.1" fill="none" stroke="#d4d4d4" stroke-width="0.9" /><path d="M0.4 4.4H8.4M4.4 0.4V8.4M4.4 0.4C2.4 2.4 2.4 6.4 4.4 8.4C6.4 6.4 6.4 2.4 4.4 0.4" fill="none" stroke="#d4d4d4" stroke-width="0.6" /><path d="M7 5.4L10 6.6L8 7.2L7.4 9Z" fill="#e8e8e8" /></g>
<g transform="translate(1186 611.6)"><path d="M1 0H9A1 1 0 0 1 10 1V6A1 1 0 0 1 9 7H4L2 9V7H1A1 1 0 0 1 0 6V1A1 1 0 0 1 1 0Z" fill="#c4c4c4" /><circle cx="2.8" cy="3.5" r="0.8" fill="#444" /><circle cx="5" cy="3.5" r="0.8" fill="#444" /><circle cx="7.2" cy="3.5" r="0.8" fill="#444" /></g>
<g transform="translate(897 78.6)"><rect x="0" y="0" width="8.6" height="8.6" fill="#3a5f8f" /><rect x="0.4" y="0.4" width="3" height="3.4" fill="#eef0f4" /><rect x="4" y="0.4" width="4.2" height="4.4" fill="#f4f4f4" /><rect x="0.4" y="4.4" width="3" height="3.8" fill="#9eb4d0" /><rect x="4" y="5.4" width="4.2" height="2.8" fill="#c4d0e0" /><line x1="3" y1="6.6" x2="7.6" y2="1" stroke="#3c5f92" stroke-width="0.8" /></g>
<path d="M1191.7 82H1195.1000000000001L1193.4 84.5Z" fill="#d8d8d8"/>
<g transform="translate(897 100.4)"><path d="M1 6.4L8.4 2.4L13.4 6.4L6 10.6Z" fill="#f2c832" /><path d="M1 6.4L6 10.6L4.6 11.4L0.4 7.6Z" fill="#d2431f" /><path d="M3.6 3.4L8.4 1.4L10 3.2L5.6 5.4Z" fill="#5b93d6" /><line x1="9" y1="6.4" x2="14.4" y2="1.4" stroke="#e8a01c" stroke-width="1.5" /><circle cx="6" cy="7.4" r="1.2" fill="#e05a2a" /></g>
<g transform="translate(897.6 117)"><path d="M6.6 0.2L13 3.4V10.6L6.6 14L0.4 10.6V3.4Z" fill="#f2d22e" /><path d="M6.6 0.2L13 3.4L6.6 6.8L0.4 3.4Z" fill="#d42e2e" /><path d="M0.4 3.4L6.6 6.8V14L0.4 10.6Z" fill="#58b038" /><circle cx="6.6" cy="3.4" r="1.6" fill="#f6a0a0" /><circle cx="3.4" cy="9" r="1.5" fill="#d8f0c8" /><circle cx="10" cy="9" r="1.5" fill="#fdf4c0" /></g>
<g transform="translate(897 136)"><rect x="4.4" y="0.4" width="5.8" height="4.4" fill="#e05a5a" /><path d="M7.2 4.8V7.4M2.8 9.6V7.4H11.8V9.6" fill="none" stroke="#d4d4d4" stroke-width="0.9" /><rect x="0.4" y="9" width="5.2" height="4.8" fill="#f2d22e" /><rect x="9" y="9" width="5.2" height="4.8" fill="#8cc0ee" /><rect x="5.6" y="6" width="3.2" height="3" fill="#e6e6e6" /></g>
<g transform="translate(898 156)"><circle cx="3.4" cy="3.4" r="3.1" fill="#5aa878" /><path d="M1 3C2 2 3 4 5.6 2.6" fill="none" stroke="#cfe8d8" stroke-width="0.8" /><path d="M12.6 4.6C13.4 8 10.4 10.6 7 9.6V11.6L3.4 8.4L7 5.4V7.4C9.4 8 11 6.6 10.4 4.6Z" fill="#f08a2a" /></g>
<g transform="translate(929.4 101)"><line x1="1.2" y1="0.8" x2="5.6" y2="5.4" stroke="#d0d0d0" stroke-width="1" /><line x1="5.8" y1="5.4" x2="10.6" y2="10" stroke="#e8641a" stroke-width="2.3" stroke-linecap="round"/><line x1="0.8" y1="10" x2="5.4" y2="5.6" stroke="#4a86d0" stroke-width="1.6" stroke-linecap="round"/><line x1="5.4" y1="5.6" x2="9" y2="2" stroke="#8a8f98" stroke-width="0.9" /><circle cx="1.2" cy="0.9" r="0.9" fill="#ececec" /></g>
<defs><linearGradient id="cg" x1="0" y1="0" x2="1" y2="1"><stop offset="0" stop-color="#2f6fd6"/><stop offset="0.3" stop-color="#2fa0c8"/><stop offset="0.5" stop-color="#3fb84a"/><stop offset="0.72" stop-color="#b8c832"/><stop offset="0.88" stop-color="#e8902a"/><stop offset="1" stop-color="#e03a2a"/></linearGradient></defs>
<g transform="translate(965 97.8)"><rect x="0" y="0" width="12.2" height="13.4" fill="url(#cg)" /><path d="M0 9L9 0M0 13.4L12.2 3M4 13.4L12.2 7.4" fill="none" stroke="#1f5f9f" stroke-width="0.4" opacity="0.6"/></g>
<g transform="translate(1002 101.6)"><line x1="0.6" y1="0.6" x2="7.6" y2="7.6" stroke="#0c0c0c" stroke-width="1.2" /><path d="M9.6 9.6L4.8 8.4L8.4 4.8Z" fill="#0c0c0c" /></g>
<g transform="translate(1037.4 101.8)"><rect x="0" y="0" width="9.6" height="9.2" fill="#0c0c0c" /><rect x="0.9" y="0.9" width="1.9" height="1.8" fill="#323232" /><rect x="3.9" y="0.9" width="1.9" height="1.8" fill="#323232" /><rect x="6.9" y="0.9" width="1.9" height="1.8" fill="#323232" /><rect x="0.9" y="3.8" width="1.9" height="1.8" fill="#323232" /><rect x="3.9" y="3.8" width="1.9" height="1.8" fill="#323232" /><rect x="6.9" y="3.8" width="1.9" height="1.8" fill="#323232" /><rect x="0.9" y="6.7" width="1.9" height="1.8" fill="#323232" /><rect x="3.9" y="6.7" width="1.9" height="1.8" fill="#323232" /><rect x="6.9" y="6.7" width="1.9" height="1.8" fill="#323232" /></g>
<g transform="translate(1072 101)"><path d="M0.6 5.4L6.4 0.4L11 2.2L6.4 4L11 5.6L6.4 7.4L11 9L6.4 10.8Z" fill="#141414" /><line x1="6.4" y1="0.4" x2="6.4" y2="10.8" stroke="#141414" stroke-width="1" /></g>
<path d="M1179.3 151.4H1182.7L1181 149.20000000000002Z" fill="#c8c8c8"/><path d="M1179.3 155.6H1182.7L1181 157.79999999999998Z" fill="#c8c8c8"/>
<path d="M1075.3 200.4H1078.7L1077 198.20000000000002Z" fill="#c8c8c8"/><path d="M1075.3 204.6H1078.7L1077 206.79999999999998Z" fill="#c8c8c8"/>
<path d="M1173.3 202H1176.7L1175 204.5Z" fill="#c8c8c8"/>
<path d="M1177.3 262H1180.7L1179 264.5Z" fill="#c8c8c8"/>
<path d="M1176.8999999999999 283H1180.3L1178.6 285.5Z" fill="#c8c8c8"/>
<path d="M1041.3 492H1044.7L1043 494.5Z" fill="#c8c8c8"/>
<path d="M1177.7 490.76H1181.1000000000001L1179.4 488.56Z" fill="#c8c8c8"/><path d="M1177.7 495.24H1181.1000000000001L1179.4 497.44Z" fill="#c8c8c8"/>
<g transform="translate(979.4 509.4)"><line x1="0.4" y1="5" x2="10" y2="5" stroke="#6fc05a" stroke-width="3" /><line x1="5.2" y1="0.2" x2="5.2" y2="9.8" stroke="#6fc05a" stroke-width="3" /><line x1="1.4" y1="5" x2="9" y2="5" stroke="#e8f6e2" stroke-width="1" /><line x1="5.2" y1="1.2" x2="5.2" y2="8.8" stroke="#e8f6e2" stroke-width="1" /></g>
<g transform="translate(1003 512.4)"><rect x="0" y="0" width="10.4" height="3.8" fill="#e04a4a" rx="0.6" /><line x1="1.4" y1="1.9" x2="9" y2="1.9" stroke="#f6c4c4" stroke-width="1" /></g>
<g transform="translate(1026 509.6)"><path d="M0.2 0.4H3.8L4.8 1.6H9.4V3H0.2Z" fill="#e6bf3a" /><path d="M0.2 2.6H10.4L9.6 9.2H0.2Z" fill="#f7d53a" /></g>
<g transform="translate(1049.4 509.4)"><rect x="0" y="0" width="9.4" height="9.8" fill="#4f86c8" rx="0.6" /><rect x="1.8" y="0.4" width="5.8" height="3.8" fill="#e9edf2" /><rect x="2.2" y="5.8" width="5" height="4" fill="#d4dbe6" /><rect x="3" y="6.6" width="1.4" height="2.4" fill="#2a4b7c" /><circle cx="8.6" cy="8.8" r="1.8" fill="#57b04a" /></g>
<g transform="translate(921.6 589.6)"><path d="M0.4 4.2L4.6 0.6V2.8C8.4 2.8 10.4 5.4 9.4 9.6C8.8 7.2 7.4 6 4.6 6V8Z" fill="#f0783c" /></g>
<g transform="translate(941 589.6)"><path d="M10.2 4.2L6 0.6V2.8C2.2 2.8 0.2 5.4 1.2 9.6C1.8 7.2 3.2 6 6 6V8Z" fill="#5fc04a" /></g>
<path d="M1142.6 594.6L1145.2 598.4L1150.8 588.8" fill="none" stroke="#a4c48a" stroke-width="1.2"/>
<defs><linearGradient id="g1" gradientUnits="userSpaceOnUse" x1="196.5" y1="0" x2="844.5" y2="0"><stop offset="0" stop-color="#d01c8b"/><stop offset="0.5" stop-color="#f3c6e2"/><stop offset="1" stop-color="#cce8a9"/></linearGradient>
<linearGradient id="g2" gradientUnits="userSpaceOnUse" x1="844.5" y1="455.4" x2="520.3" y2="131.8"><stop offset="0" stop-color="#cce8a9"/><stop offset="1" stop-color="#4dac26"/></linearGradient></defs>
<path d="M196.5 455.4H844.5" stroke="url(#g1)" stroke-width="13" stroke-linecap="round" fill="none"/>
<path d="M844.5 455.4L520.3 131.8" stroke="url(#g2)" stroke-width="13" stroke-linecap="round" fill="none"/>
<g transform="translate(843.2 141) scale(1.36 1.12)"><path d="M4.2 13.2C3.2 11.2 1.2 9 0.4 7.4C0 6.4 1 5.8 1.8 6.6L3.4 8.4V2.6C3.4 1.6 4.8 1.6 4.9 2.6V1.4C5 0.4 6.5 0.4 6.6 1.4V1.2C6.7 0.3 8.2 0.3 8.3 1.3V2.2C8.4 1.4 9.8 1.4 9.9 2.4V8.6C9.9 10.6 9.3 11.8 8.7 13.2Z" fill="#464646" stroke="#e2e2e2" stroke-width="0.9" vector-effect="non-scaling-stroke"/><path d="M5 2.8V6M6.6 2V6M8.3 2.4V6" stroke="#bdbdbd" stroke-width="0.6" vector-effect="non-scaling-stroke" fill="none"/></g>
</svg>
</body></html>
